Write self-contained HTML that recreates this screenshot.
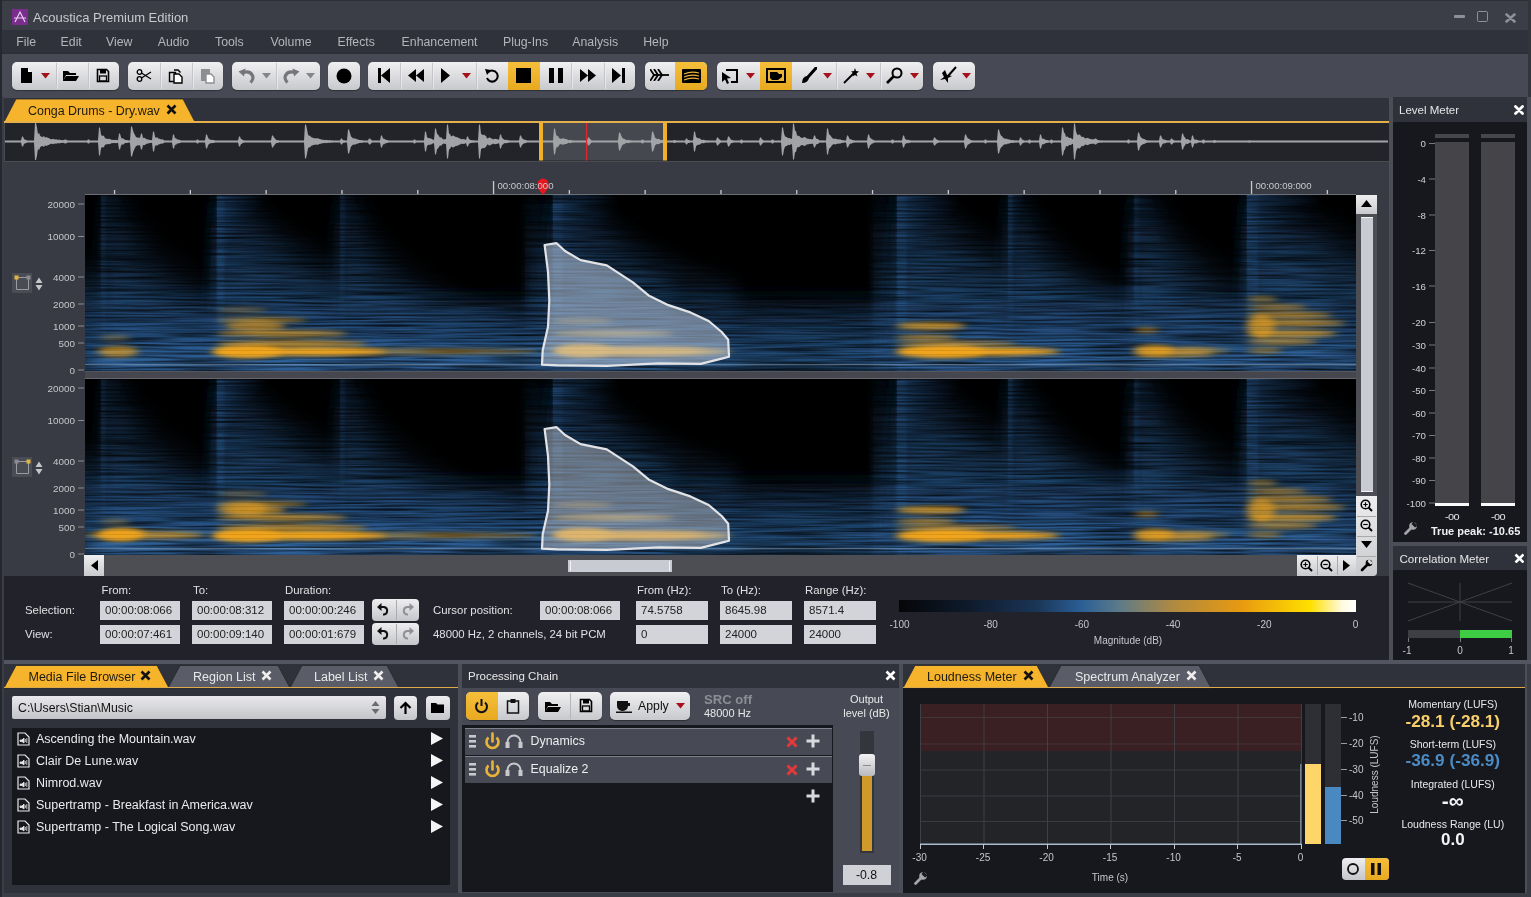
<!DOCTYPE html>
<html><head><meta charset="utf-8"><style>
html,body{margin:0;padding:0;width:1531px;height:897px;overflow:hidden;background:#2a2c33;}
body{position:relative;font-family:"Liberation Sans",sans-serif;}
div{position:absolute;box-sizing:border-box;}
.t{white-space:pre;}
</style></head><body>
<div style="left:0px;top:0px;width:1531px;height:30px;background:#3b3d47;"></div>
<div style="left:0px;top:0px;width:1531px;height:1px;background:#2c2e35;"></div>
<svg style="position:absolute;left:12px;top:9px;" width="16" height="16" viewBox="0 0 16 16"><rect width="16" height="16" fill="#7b2d8e"/><path d="M3 13 L8 3 L13 13 M2 9 H14" stroke="#e6d0ee" stroke-width="1.2" fill="none"/></svg>
<div class="t" style="left:33px;top:8.5px;font-size:13px;line-height:17px;color:#c9cace;">Acoustica Premium Edition</div>
<div style="left:1454px;top:15.2px;width:11px;height:2.6px;background:#8e9099;border-radius:1px;"></div>
<div style="left:1477px;top:11px;width:11px;height:11px;border:1.5px solid #8e9099;border-radius:1.5px;"></div>
<svg style="position:absolute;left:1505px;top:12.5px;" width="11" height="10" viewBox="0 0 11 10"><path d="M1.5 1.5 L9.5 8.5 M9.5 1.5 L1.5 8.5" stroke="#8e9099" stroke-width="2.6" stroke-linecap="round"/></svg>
<div style="left:0px;top:30px;width:1531px;height:24px;background:#30323b;"></div>
<div style="left:0px;top:52px;width:1531px;height:2px;background:#2d2f37;"></div>
<div class="t" style="left:16.2px;top:33.5px;font-size:12.3px;line-height:16px;color:#b4b5ba;">File</div>
<div class="t" style="left:60.6px;top:33.5px;font-size:12.3px;line-height:16px;color:#b4b5ba;">Edit</div>
<div class="t" style="left:106px;top:33.5px;font-size:12.3px;line-height:16px;color:#b4b5ba;">View</div>
<div class="t" style="left:157.7px;top:33.5px;font-size:12.3px;line-height:16px;color:#b4b5ba;">Audio</div>
<div class="t" style="left:215px;top:33.5px;font-size:12.3px;line-height:16px;color:#b4b5ba;">Tools</div>
<div class="t" style="left:270.5px;top:33.5px;font-size:12.3px;line-height:16px;color:#b4b5ba;">Volume</div>
<div class="t" style="left:337.5px;top:33.5px;font-size:12.3px;line-height:16px;color:#b4b5ba;">Effects</div>
<div class="t" style="left:401.6px;top:33.5px;font-size:12.3px;line-height:16px;color:#b4b5ba;">Enhancement</div>
<div class="t" style="left:503px;top:33.5px;font-size:12.3px;line-height:16px;color:#b4b5ba;">Plug-Ins</div>
<div class="t" style="left:572.3px;top:33.5px;font-size:12.3px;line-height:16px;color:#b4b5ba;">Analysis</div>
<div class="t" style="left:643.2px;top:33.5px;font-size:12.3px;line-height:16px;color:#b4b5ba;">Help</div>
<div style="left:0px;top:54px;width:1531px;height:44px;background:#474a54;"></div>
<div style="left:12px;top:62px;width:107px;height:27.5px;background:linear-gradient(#f0f0f2,#c8c9cd);border-radius:5px;box-shadow:0 1px 1px rgba(0,0,0,0.35);"></div>
<div style="left:56px;top:63px;width:1px;height:25.5px;background:#c4c5c9;"></div>
<div style="left:57px;top:63px;width:1px;height:25.5px;background:#f4f4f6;opacity:0.6;"></div>
<div style="left:87.5px;top:63px;width:1px;height:25.5px;background:#c4c5c9;"></div>
<div style="left:88.5px;top:63px;width:1px;height:25.5px;background:#f4f4f6;opacity:0.6;"></div>
<div style="left:128px;top:62px;width:95px;height:27.5px;background:linear-gradient(#f0f0f2,#c8c9cd);border-radius:5px;box-shadow:0 1px 1px rgba(0,0,0,0.35);"></div>
<div style="left:159.5px;top:63px;width:1px;height:25.5px;background:#c4c5c9;"></div>
<div style="left:160.5px;top:63px;width:1px;height:25.5px;background:#f4f4f6;opacity:0.6;"></div>
<div style="left:192px;top:63px;width:1px;height:25.5px;background:#c4c5c9;"></div>
<div style="left:193px;top:63px;width:1px;height:25.5px;background:#f4f4f6;opacity:0.6;"></div>
<div style="left:232px;top:62px;width:87.5px;height:27.5px;background:linear-gradient(#f0f0f2,#c8c9cd);border-radius:5px;box-shadow:0 1px 1px rgba(0,0,0,0.35);"></div>
<div style="left:276px;top:63px;width:1px;height:25.5px;background:#c4c5c9;"></div>
<div style="left:277px;top:63px;width:1px;height:25.5px;background:#f4f4f6;opacity:0.6;"></div>
<div style="left:328px;top:62px;width:31.5px;height:27.5px;background:linear-gradient(#f0f0f2,#c8c9cd);border-radius:5px;box-shadow:0 1px 1px rgba(0,0,0,0.35);"></div>
<div style="left:368.4px;top:62px;width:267.0px;height:27.5px;background:linear-gradient(#f0f0f2,#c8c9cd);border-radius:5px;box-shadow:0 1px 1px rgba(0,0,0,0.35);"></div>
<div style="left:507.7px;top:62px;width:32.30000000000001px;height:27.5px;background:linear-gradient(#f6bf3a,#e8a920);"></div>
<div style="left:400px;top:63px;width:1px;height:25.5px;background:#c4c5c9;"></div>
<div style="left:401px;top:63px;width:1px;height:25.5px;background:#f4f4f6;opacity:0.6;"></div>
<div style="left:431.5px;top:63px;width:1px;height:25.5px;background:#c4c5c9;"></div>
<div style="left:432.5px;top:63px;width:1px;height:25.5px;background:#f4f4f6;opacity:0.6;"></div>
<div style="left:476px;top:63px;width:1px;height:25.5px;background:#c4c5c9;"></div>
<div style="left:477px;top:63px;width:1px;height:25.5px;background:#f4f4f6;opacity:0.6;"></div>
<div style="left:571.4px;top:63px;width:1px;height:25.5px;background:#c4c5c9;"></div>
<div style="left:572.4px;top:63px;width:1px;height:25.5px;background:#f4f4f6;opacity:0.6;"></div>
<div style="left:603.6px;top:63px;width:1px;height:25.5px;background:#c4c5c9;"></div>
<div style="left:604.6px;top:63px;width:1px;height:25.5px;background:#f4f4f6;opacity:0.6;"></div>
<div style="left:644.6px;top:62px;width:62.799999999999955px;height:27.5px;background:linear-gradient(#f0f0f2,#c8c9cd);border-radius:5px;box-shadow:0 1px 1px rgba(0,0,0,0.35);"></div>
<div style="left:675.4px;top:62px;width:32.0px;height:27.5px;background:linear-gradient(#f6bf3a,#e8a920);border-top-right-radius:5px;border-bottom-right-radius:5px;"></div>
<div style="left:716.6px;top:62px;width:206.89999999999998px;height:27.5px;background:linear-gradient(#f0f0f2,#c8c9cd);border-radius:5px;box-shadow:0 1px 1px rgba(0,0,0,0.35);"></div>
<div style="left:760px;top:62px;width:32px;height:27.5px;background:linear-gradient(#f6bf3a,#e8a920);"></div>
<div style="left:835.5px;top:63px;width:1px;height:25.5px;background:#c4c5c9;"></div>
<div style="left:836.5px;top:63px;width:1px;height:25.5px;background:#f4f4f6;opacity:0.6;"></div>
<div style="left:879.6px;top:63px;width:1px;height:25.5px;background:#c4c5c9;"></div>
<div style="left:880.6px;top:63px;width:1px;height:25.5px;background:#f4f4f6;opacity:0.6;"></div>
<div style="left:932.6px;top:62px;width:42.799999999999955px;height:27.5px;background:linear-gradient(#f0f0f2,#c8c9cd);border-radius:5px;box-shadow:0 1px 1px rgba(0,0,0,0.35);"></div>
<svg style="position:absolute;left:20px;top:67px;" width="14" height="17" viewBox="0 0 14 17"><path d="M1 1 H8 L12 5 V16 H1Z" fill="#000"/><path d="M8 1 V5 H12" fill="#fff" stroke="none"/><path d="M8 1 L12 5 H8Z" fill="#fff"/></svg>
<svg style="position:absolute;left:41px;top:73px;" width="9" height="6" viewBox="0 0 9 6"><path d="M0 0 H9 L4.5 5.5Z" fill="#a5121b"/></svg>
<svg style="position:absolute;left:62px;top:69px;" width="18" height="13" viewBox="0 0 18 13"><path d="M1 2 H6 L8 4 H14 V6 H4 L1 12Z M4 7 H17 L14 12 H1Z" fill="#000"/></svg>
<svg style="position:absolute;left:96px;top:68px;" width="14" height="15" viewBox="0 0 14 15"><path d="M1.5 1.5 H10.5 L12.5 3.5 V13.5 H1.5Z" fill="none" stroke="#000" stroke-width="1.6"/><rect x="4" y="1.5" width="6" height="4" fill="#000"/><rect x="3.5" y="8" width="7" height="5" fill="none" stroke="#000" stroke-width="1.3"/></svg>
<svg style="position:absolute;left:136px;top:68px;" width="16" height="15" viewBox="0 0 16 15"><circle cx="3.5" cy="4" r="2.3" fill="none" stroke="#000" stroke-width="1.3"/><circle cx="3.5" cy="11" r="2.3" fill="none" stroke="#000" stroke-width="1.3"/><path d="M5.5 5 L15 11 M5.5 10 L15 4" stroke="#000" stroke-width="1.2"/></svg>
<svg style="position:absolute;left:168px;top:68px;" width="16" height="16" viewBox="0 0 16 16"><path d="M1.5 4.5 H7.5 V13.5 H1.5Z M6 2 H10 L12.5 4.5" fill="none" stroke="#000" stroke-width="1.4"/><path d="M6 6 H11 L14 9 V15 H6Z" fill="#fff" stroke="#000" stroke-width="1.4"/></svg>
<svg style="position:absolute;left:200px;top:68px;" width="16" height="16" viewBox="0 0 16 16"><path d="M1 1 H10 V13 H1Z" fill="#8d8e92"/><path d="M6 6 H11 L14 9 V15 H6Z" fill="#fff" stroke="#8d8e92" stroke-width="1.4"/></svg>
<svg style="position:absolute;left:238px;top:68px;" width="18" height="16" viewBox="0 0 18 16"><path d="M5 4.5 Q12 2.5 14.5 7.5 Q16 11 12.5 14.5" fill="none" stroke="#75767b" stroke-width="3.2"/><path d="M0.5 3.5 L7.5 0.5 L6 8.5Z" fill="#75767b"/></svg>
<svg style="position:absolute;left:262px;top:73px;" width="9" height="6" viewBox="0 0 9 6"><path d="M0 0 H9 L4.5 5.5Z" fill="#85868b"/></svg>
<svg style="position:absolute;left:282px;top:68px;" width="18" height="16" viewBox="0 0 18 16"><path d="M13 4.5 Q6 2.5 3.5 7.5 Q2 11 5.5 14.5" fill="none" stroke="#75767b" stroke-width="3.2"/><path d="M17.5 3.5 L10.5 0.5 L12 8.5Z" fill="#75767b"/></svg>
<svg style="position:absolute;left:306px;top:73px;" width="9" height="6" viewBox="0 0 9 6"><path d="M0 0 H9 L4.5 5.5Z" fill="#85868b"/></svg>
<svg style="position:absolute;left:336px;top:68px;" width="16" height="16" viewBox="0 0 16 16"><circle cx="8" cy="8" r="7.5" fill="#000"/></svg>
<svg style="position:absolute;left:377px;top:68px;" width="14" height="15" viewBox="0 0 14 15"><rect x="1" y="0" width="3" height="15"/><path d="M13 0 V15 L4 7.5Z"/></svg>
<svg style="position:absolute;left:408px;top:69px;" width="16" height="13" viewBox="0 0 16 13"><path d="M8 0 V13 L0 6.5Z M16 0 V13 L8 6.5Z"/></svg>
<svg style="position:absolute;left:441px;top:68px;" width="9" height="15" viewBox="0 0 9 15"><path d="M0 0 V15 L9 7.5Z"/></svg>
<svg style="position:absolute;left:462px;top:73px;" width="9" height="6" viewBox="0 0 9 6"><path d="M0 0 H9 L4.5 5.5Z" fill="#a5121b"/></svg>
<svg style="position:absolute;left:484px;top:68px;" width="15" height="15" viewBox="0 0 15 15"><path d="M4.5 4 A5.5 5.5 0 1 1 3 10" fill="none" stroke="#000" stroke-width="2"/><path d="M1 1 L7 2 L3 7Z"/></svg>
<svg style="position:absolute;left:516px;top:68px;" width="15" height="15" viewBox="0 0 15 15"><rect width="15" height="15"/></svg>
<svg style="position:absolute;left:549px;top:68px;" width="14" height="15" viewBox="0 0 14 15"><rect x="0" width="5" height="15"/><rect x="9" width="5" height="15"/></svg>
<svg style="position:absolute;left:580px;top:69px;" width="16" height="13" viewBox="0 0 16 13"><path d="M0 0 V13 L8 6.5Z M8 0 V13 L16 6.5Z"/></svg>
<svg style="position:absolute;left:612px;top:68px;" width="14" height="15" viewBox="0 0 14 15"><path d="M0 0 V15 L9 7.5Z"/><rect x="10" width="3" height="15"/></svg>
<svg style="position:absolute;left:650px;top:69px;" width="19" height="12" viewBox="0 0 19 12"><path d="M0 0 L4 6 L0 12 M4 0 L8 6 L4 12 M8 0 L12 6 L8 12" fill="none" stroke="#000" stroke-width="1.8"/><path d="M4 6 H19" stroke="#000" stroke-width="1.8"/></svg>
<svg style="position:absolute;left:682px;top:69px;" width="19" height="14" viewBox="0 0 19 14"><rect width="19" height="14" rx="1" fill="#000"/><path d="M2 5 Q9 2 17 4 M2 8 Q9 5 17 7 M2 11 Q9 8 17 10" stroke="#e9b23a" stroke-width="1.2" fill="none"/></svg>
<svg style="position:absolute;left:722px;top:68px;" width="17" height="16" viewBox="0 0 17 16"><path d="M4 2 H15 V14 H9" fill="none" stroke="#000" stroke-width="2"/><path d="M0 4 L9 10 L5 10.5 L7 15 L5 16 L3 11.5 L0 14Z"/></svg>
<svg style="position:absolute;left:746px;top:73px;" width="9" height="6" viewBox="0 0 9 6"><path d="M0 0 H9 L4.5 5.5Z" fill="#a5121b"/></svg>
<svg style="position:absolute;left:766px;top:68px;" width="20" height="15" viewBox="0 0 20 15"><rect width="20" height="15" fill="#000"/><rect x="2" y="2" width="16" height="11" fill="#e9b23a"/><path d="M4 4 H11 L13 6 H16 V9 L12 12 H6 L4 10Z" fill="#000"/></svg>
<svg style="position:absolute;left:801px;top:67px;" width="16" height="17" viewBox="0 0 16 17"><path d="M15 1 L7 10" stroke="#000" stroke-width="3" stroke-linecap="round"/><path d="M6 9 Q1 10 1 16 Q7 16 8 11Z"/></svg>
<svg style="position:absolute;left:823px;top:73px;" width="9" height="6" viewBox="0 0 9 6"><path d="M0 0 H9 L4.5 5.5Z" fill="#a5121b"/></svg>
<svg style="position:absolute;left:843px;top:67px;" width="17" height="17" viewBox="0 0 17 17"><path d="M1 16 L11 6" stroke="#000" stroke-width="1.8"/><path d="M12 1 L13 4 L16 4.5 L13.5 6.5 L14.5 9.5 L12 8 L9.5 9.5 L10.5 6.5 L8 4.5 L11 4Z"/></svg>
<svg style="position:absolute;left:866px;top:73px;" width="9" height="6" viewBox="0 0 9 6"><path d="M0 0 H9 L4.5 5.5Z" fill="#a5121b"/></svg>
<svg style="position:absolute;left:886px;top:67px;" width="17" height="17" viewBox="0 0 17 17"><circle cx="11" cy="6" r="4.5" fill="none" stroke="#000" stroke-width="2"/><path d="M8 9 L1 16" stroke="#000" stroke-width="2.6"/></svg>
<svg style="position:absolute;left:910px;top:73px;" width="9" height="6" viewBox="0 0 9 6"><path d="M0 0 H9 L4.5 5.5Z" fill="#a5121b"/></svg>
<svg style="position:absolute;left:939px;top:66px;" width="18" height="18" viewBox="0 0 18 18"><path d="M17 1 L9 10" stroke="#000" stroke-width="2"/><path d="M3 7 L5 11 L1 14 L6 13 L9 17 L9 12 L13 10 L8 9 L6 4Z"/></svg>
<svg style="position:absolute;left:962px;top:73px;" width="9" height="6" viewBox="0 0 9 6"><path d="M0 0 H9 L4.5 5.5Z" fill="#a5121b"/></svg>
<div style="left:0px;top:98px;width:1389px;height:25px;background:#30323b;"></div>
<svg style="position:absolute;left:4px;top:98px;" width="192" height="25" viewBox="0 0 192 25"><path d="M0 24 L12 1 H179 L191 24Z" fill="#f5b42b" stroke="#2a2b30" stroke-width="0.8"/></svg>
<div class="t" style="left:28px;top:102.5px;font-size:12.45px;line-height:16px;color:#1d1a12;">Conga Drums - Dry.wav</div>
<svg style="position:absolute;left:166px;top:104px;" width="11" height="11" viewBox="0 0 11 11"><path d="M1.5 1.5 L9.5 9.5 M9.5 1.5 L1.5 9.5" stroke="#111" stroke-width="2.6"/></svg>
<div style="left:4px;top:121px;width:1385px;height:1.6px;background:#e3b04c;"></div>
<div style="left:0px;top:0px;width:1px;height:897px;background:#262830;"></div>
<div style="left:1528px;top:0px;width:3px;height:897px;background:#33353d;"></div>
<div style="left:1px;top:97px;width:3px;height:800px;background:#3a3c45;"></div>
<div style="left:4px;top:123px;width:1385px;height:39px;background:#23242a;border-left:1px solid #484a52;border-bottom:1.5px solid #4a4c54;"></div>
<svg style="position:absolute;left:0px;top:0px;" width="1389" height="162" viewBox="0 0 1389 162"><rect x="543" y="123" width="120" height="37.5" fill="#46484f"/><rect x="5" y="141.0" width="1383" height="1" fill="#5f6065"/><polygon points="5,140.5 6,140.5 7,140.5 8,140.5 9,140.5 10,140.5 11,140.5 12,140.5 13,140.5 14,140.5 15,140.5 16,140.5 17,140.5 18,140.5 19,140.5 20,140.5 21,140.5 22,136.5 23,136.5 24,139.0 25,139.8 26,139.8 27,140.5 28,140.5 29,140.5 30,140.5 31,140.5 32,140.5 33,140.5 34,140.5 35,123.0 36,123.0 37,127.5 38,134.5 39,132.4 40,135.4 41,136.4 42,136.9 43,136.8 44,135.9 45,137.7 46,137.1 47,137.3 48,138.1 49,138.0 50,139.0 51,139.2 52,139.2 53,138.7 54,139.2 55,139.5 56,139.3 57,139.6 58,139.9 59,139.6 60,139.8 61,140.2 62,140.1 63,140.2 64,140.1 65,139.5 66,139.5 67,140.3 68,140.5 69,140.5 70,140.5 71,140.5 72,140.5 73,140.5 74,140.5 75,140.5 76,140.5 77,140.5 78,140.5 79,140.5 80,140.5 81,140.5 82,140.5 83,140.5 84,140.5 85,140.5 86,140.5 87,140.5 88,139.5 89,139.5 90,140.5 91,140.5 92,140.5 93,140.5 94,140.5 95,140.5 96,140.5 97,140.5 98,140.5 99,127.5 100,127.5 101,134.6 102,136.0 103,135.5 104,136.1 105,138.3 106,138.5 107,138.7 108,139.0 109,138.8 110,138.9 111,139.5 112,140.0 113,139.7 114,139.9 115,139.9 116,139.7 117,140.0 118,140.3 119,133.5 120,133.5 121,137.2 122,138.8 123,138.2 124,139.1 125,139.9 126,140.0 127,140.1 128,140.3 129,140.5 130,140.3 131,126.5 132,126.5 133,130.5 134,133.2 135,135.1 136,137.0 137,137.3 138,138.1 139,137.3 140,138.0 141,133.5 142,133.5 143,137.9 144,137.7 145,138.1 146,138.9 147,139.3 148,139.5 149,139.7 150,140.0 151,140.1 152,140.3 153,131.5 154,131.5 155,136.8 156,138.1 157,137.0 158,138.2 159,138.8 160,138.7 161,139.5 162,139.3 163,139.6 164,140.3 165,140.4 166,140.5 167,140.5 168,140.5 169,140.5 170,140.5 171,140.5 172,140.5 173,134.5 174,134.5 175,138.5 176,138.1 177,139.5 178,139.6 179,139.7 180,140.1 181,140.4 182,140.5 183,140.5 184,140.5 185,140.5 186,140.5 187,140.5 188,140.5 189,140.5 190,140.5 191,140.5 192,140.5 193,140.5 194,140.5 195,140.5 196,140.5 197,139.5 198,139.5 199,140.5 200,140.5 201,140.5 202,140.5 203,140.5 204,140.5 205,140.5 206,134.5 207,134.5 208,137.6 209,139.1 210,139.4 211,140.0 212,139.7 213,139.9 214,140.1 215,140.5 216,140.5 217,140.5 218,140.5 219,140.5 220,140.5 221,140.5 222,140.5 223,140.5 224,140.5 225,140.5 226,140.5 227,140.5 228,140.5 229,140.5 230,140.5 231,140.5 232,140.5 233,140.5 234,140.5 235,140.5 236,140.5 237,140.5 238,140.5 239,136.5 240,136.5 241,139.0 242,139.2 243,140.3 244,140.2 245,140.5 246,140.5 247,140.5 248,140.5 249,140.5 250,140.5 251,140.5 252,140.5 253,140.5 254,140.5 255,140.5 256,140.5 257,140.5 258,140.5 259,140.5 260,140.5 261,140.5 262,140.5 263,140.5 264,140.5 265,140.5 266,140.5 267,140.5 268,140.5 269,140.5 270,140.5 271,140.5 272,135.5 273,135.5 274,137.4 275,138.6 276,139.8 277,140.2 278,139.9 279,140.4 280,140.5 281,140.5 282,140.5 283,140.5 284,140.5 285,140.5 286,140.5 287,140.5 288,140.5 289,140.5 290,140.5 291,140.5 292,140.5 293,140.5 294,140.5 295,140.5 296,140.5 297,140.5 298,140.5 299,140.5 300,140.5 301,140.5 302,140.5 303,140.5 304,140.5 305,124.5 306,124.5 307,129.3 308,134.4 309,136.0 310,135.5 311,136.9 312,137.6 313,137.8 314,138.3 315,138.3 316,138.3 317,138.6 318,138.1 319,139.0 320,138.9 321,139.5 322,139.4 323,139.9 324,139.8 325,140.2 326,139.7 327,139.9 328,140.3 329,140.2 330,140.0 331,140.5 332,140.3 333,140.5 334,140.5 335,140.5 336,140.5 337,140.5 338,140.5 339,140.5 340,140.5 341,138.5 342,138.5 343,140.2 344,140.1 345,140.5 346,140.5 347,140.5 348,129.5 349,129.5 350,132.9 351,136.5 352,137.3 353,138.6 354,138.3 355,138.5 356,138.8 357,139.4 358,139.3 359,140.0 360,139.9 361,140.2 362,140.1 363,140.5 364,140.5 365,140.5 366,140.5 367,140.5 368,140.5 369,138.5 370,138.5 371,139.6 372,140.5 373,140.5 374,140.5 375,140.5 376,140.5 377,140.5 378,140.5 379,140.5 380,140.5 381,135.5 382,135.5 383,138.8 384,138.6 385,139.5 386,139.8 387,140.1 388,140.3 389,140.5 390,140.5 391,140.5 392,140.5 393,140.5 394,140.5 395,140.5 396,140.5 397,140.5 398,140.5 399,140.5 400,140.5 401,140.5 402,140.5 403,140.5 404,140.5 405,140.5 406,140.5 407,140.5 408,140.5 409,140.5 410,140.5 411,140.5 412,140.5 413,140.5 414,139.5 415,139.5 416,140.4 417,140.5 418,140.5 419,140.5 420,140.5 421,140.5 422,140.5 423,140.5 424,140.5 425,131.5 426,131.5 427,137.1 428,138.0 429,138.3 430,138.2 431,138.6 432,139.0 433,139.7 434,139.7 435,128.5 436,128.5 437,133.8 438,134.4 439,136.0 440,137.8 441,137.0 442,138.2 443,139.2 444,139.4 445,139.0 446,139.3 447,124.5 448,124.5 449,133.6 450,134.1 451,136.2 452,136.2 453,135.3 454,136.0 455,136.6 456,137.3 457,137.1 458,137.4 459,138.3 460,138.3 461,139.4 462,138.7 463,139.2 464,139.1 465,139.4 466,139.9 467,136.5 468,136.5 469,139.3 470,139.7 471,140.1 472,140.2 473,140.3 474,140.3 475,140.5 476,140.5 477,140.5 478,140.5 479,124.5 480,124.5 481,133.7 482,134.5 483,135.3 484,134.6 485,135.5 486,136.0 487,138.2 488,138.5 489,137.5 490,137.4 491,138.4 492,138.5 493,139.5 494,139.1 495,138.7 496,139.0 497,139.2 498,139.2 499,140.0 500,134.5 501,134.5 502,138.1 503,138.4 504,139.7 505,139.8 506,139.9 507,139.8 508,140.2 509,140.3 510,140.5 511,140.5 512,140.5 513,140.5 514,140.5 515,140.5 516,140.5 517,140.5 518,140.5 519,140.5 520,135.5 521,135.5 522,138.3 523,138.8 524,139.8 525,139.7 526,140.0 527,140.4 528,140.5 529,140.5 530,140.5 531,140.5 532,140.5 533,140.5 534,140.5 535,140.5 536,140.5 537,140.5 538,140.5 539,140.5 540,140.5 541,140.5 542,140.5 543,140.5 544,140.5 545,140.5 546,140.5 547,140.5 548,140.5 549,140.5 550,140.5 551,140.5 552,140.5 553,140.5 554,128.5 555,128.5 556,134.3 557,136.4 558,135.4 559,138.0 560,138.6 561,138.9 562,138.6 563,138.2 564,138.5 565,139.0 566,138.9 567,139.2 568,139.9 569,140.2 570,139.8 571,140.0 572,140.5 573,140.3 574,140.5 575,140.5 576,140.5 577,140.5 578,140.5 579,140.5 580,140.5 581,140.5 582,140.5 583,140.5 584,140.5 585,140.5 586,140.5 587,140.5 588,137.5 589,137.5 590,138.8 591,140.1 592,140.4 593,140.4 594,140.5 595,140.5 596,140.5 597,140.5 598,140.5 599,140.5 600,140.5 601,140.5 602,140.5 603,140.5 604,140.5 605,140.5 606,140.5 607,140.5 608,140.5 609,140.5 610,140.5 611,140.5 612,140.5 613,140.5 614,140.5 615,140.5 616,140.5 617,140.5 618,140.5 619,132.5 620,132.5 621,135.1 622,137.3 623,138.7 624,138.5 625,139.4 626,139.7 627,140.2 628,139.8 629,139.9 630,140.2 631,140.2 632,140.5 633,140.5 634,140.5 635,140.5 636,140.5 637,140.5 638,140.5 639,140.5 640,140.5 641,140.5 642,139.5 643,139.5 644,140.5 645,140.5 646,140.5 647,140.5 648,140.5 649,140.5 650,140.5 651,140.5 652,131.5 653,131.5 654,134.3 655,137.6 656,138.6 657,139.0 658,138.8 659,138.9 660,139.5 661,139.9 662,139.9 663,140.0 664,140.1 665,140.2 666,140.3 667,140.5 668,140.5 669,140.5 670,140.5 671,140.5 672,140.5 673,140.5 674,140.0 675,140.0 676,140.5 677,140.5 678,140.5 679,140.5 680,140.5 681,140.5 682,140.5 683,140.5 684,140.5 685,140.5 686,138.5 687,138.5 688,140.1 689,140.1 690,140.5 691,140.5 692,140.5 693,140.5 694,131.5 695,131.5 696,136.8 697,137.7 698,138.3 699,138.3 700,138.6 701,139.5 702,139.9 703,139.8 704,139.7 705,140.3 706,140.3 707,140.5 708,140.3 709,140.5 710,140.5 711,140.5 712,140.5 713,140.5 714,140.5 715,140.5 716,140.5 717,137.5 718,137.5 719,139.1 720,139.7 721,140.5 722,140.5 723,140.5 724,140.5 725,140.5 726,140.5 727,140.5 728,136.5 729,136.5 730,138.1 731,139.9 732,139.8 733,140.3 734,140.5 735,140.5 736,140.5 737,140.5 738,140.5 739,140.5 740,140.5 741,139.5 742,139.5 743,140.5 744,140.5 745,140.5 746,140.5 747,140.5 748,140.5 749,140.5 750,140.5 751,140.5 752,140.5 753,140.5 754,140.5 755,140.5 756,140.5 757,140.5 758,140.5 759,140.5 760,137.5 761,137.5 762,139.3 763,140.0 764,140.5 765,140.5 766,140.5 767,140.5 768,140.5 769,140.5 770,140.5 771,140.5 772,139.5 773,139.5 774,140.5 775,140.5 776,140.5 777,140.5 778,140.5 779,140.5 780,140.5 781,140.5 782,127.5 783,127.5 784,133.4 785,136.3 786,137.1 787,137.0 788,138.2 789,137.9 790,138.1 791,139.1 792,138.5 793,123.5 794,123.5 795,130.8 796,131.1 797,135.3 798,135.9 799,135.7 800,136.7 801,137.8 802,137.7 803,138.1 804,136.8 805,137.6 806,137.5 807,138.9 808,138.2 809,139.3 810,139.0 811,139.0 812,139.5 813,139.1 814,135.5 815,135.5 816,138.2 817,139.0 818,139.1 819,140.1 820,140.4 821,140.2 822,140.5 823,140.3 824,140.5 825,140.5 826,140.5 827,128.5 828,128.5 829,134.3 830,135.1 831,136.3 832,137.7 833,138.4 834,139.1 835,138.4 836,138.8 837,139.3 838,139.2 839,139.6 840,139.3 841,139.7 842,140.2 843,139.9 844,140.5 845,140.4 846,140.5 847,135.5 848,135.5 849,137.8 850,139.6 851,139.2 852,139.7 853,140.2 854,140.3 855,140.5 856,140.5 857,140.5 858,140.5 859,140.5 860,140.5 861,140.5 862,140.5 863,140.5 864,140.5 865,140.5 866,140.5 867,140.5 868,134.5 869,134.5 870,137.7 871,138.2 872,139.6 873,139.4 874,140.3 875,140.4 876,140.5 877,140.4 878,140.5 879,140.5 880,140.5 881,140.5 882,140.5 883,140.5 884,140.5 885,140.5 886,140.5 887,140.5 888,140.5 889,140.5 890,140.5 891,140.5 892,139.5 893,139.5 894,140.5 895,140.5 896,140.5 897,140.5 898,140.5 899,140.5 900,140.5 901,140.5 902,140.5 903,135.5 904,135.5 905,138.7 906,139.6 907,140.0 908,139.8 909,140.1 910,140.3 911,140.5 912,140.5 913,140.5 914,140.5 915,140.5 916,140.5 917,140.5 918,140.5 919,140.5 920,140.5 921,140.5 922,140.5 923,140.5 924,140.5 925,140.5 926,140.5 927,140.5 928,140.5 929,140.5 930,140.5 931,140.5 932,140.5 933,140.5 934,137.5 935,137.5 936,139.0 937,139.8 938,140.1 939,140.5 940,140.5 941,140.5 942,140.5 943,140.5 944,140.5 945,140.5 946,140.5 947,140.5 948,140.5 949,140.5 950,140.5 951,140.5 952,140.5 953,140.5 954,140.5 955,140.5 956,140.5 957,140.5 958,140.5 959,140.5 960,140.5 961,140.5 962,140.5 963,140.5 964,140.5 965,134.5 966,134.5 967,136.9 968,138.6 969,138.8 970,139.5 971,140.3 972,140.2 973,140.4 974,140.4 975,140.5 976,140.5 977,140.5 978,140.5 979,140.5 980,140.5 981,140.5 982,140.5 983,140.5 984,140.5 985,139.5 986,139.5 987,140.5 988,140.5 989,140.5 990,140.5 991,140.5 992,140.5 993,140.5 994,140.5 995,140.5 996,140.5 997,140.5 998,129.5 999,129.5 1000,133.5 1001,135.5 1002,136.3 1003,137.4 1004,138.4 1005,138.6 1006,138.9 1007,138.6 1008,139.8 1009,139.1 1010,140.1 1011,140.1 1012,140.2 1013,139.9 1014,140.3 1015,140.5 1016,140.3 1017,140.5 1018,140.5 1019,140.5 1020,137.5 1021,137.5 1022,139.6 1023,139.8 1024,140.5 1025,140.5 1026,140.5 1027,140.5 1028,140.5 1029,139.5 1030,139.5 1031,140.5 1032,140.5 1033,140.5 1034,140.5 1035,140.5 1036,140.5 1037,140.5 1038,140.5 1039,140.5 1040,134.5 1041,134.5 1042,138.5 1043,138.7 1044,138.8 1045,139.4 1046,139.9 1047,140.0 1048,140.3 1049,140.5 1050,140.5 1051,139.5 1052,139.5 1053,140.5 1054,140.5 1055,140.5 1056,140.5 1057,140.5 1058,140.5 1059,140.5 1060,140.5 1061,140.5 1062,127.5 1063,127.5 1064,132.5 1065,133.6 1066,136.9 1067,136.5 1068,136.8 1069,138.0 1070,138.1 1071,137.7 1072,139.3 1073,138.9 1074,123.5 1075,123.5 1076,131.6 1077,133.9 1078,135.2 1079,134.4 1080,134.5 1081,136.2 1082,137.3 1083,136.4 1084,137.6 1085,138.2 1086,138.6 1087,137.7 1088,137.9 1089,138.4 1090,138.9 1091,138.9 1092,139.5 1093,138.9 1094,139.6 1095,138.5 1096,138.5 1097,139.6 1098,140.0 1099,140.3 1100,140.2 1101,140.5 1102,140.2 1103,140.5 1104,140.4 1105,140.5 1106,140.5 1107,140.5 1108,140.5 1109,140.5 1110,140.5 1111,140.5 1112,140.5 1113,140.5 1114,140.5 1115,140.5 1116,140.5 1117,140.5 1118,140.5 1119,140.5 1120,140.5 1121,140.5 1122,140.5 1123,140.5 1124,140.5 1125,140.5 1126,140.5 1127,140.5 1128,139.5 1129,139.5 1130,140.5 1131,140.5 1132,140.5 1133,140.5 1134,140.5 1135,140.5 1136,140.5 1137,140.5 1138,132.5 1139,132.5 1140,135.8 1141,137.5 1142,137.9 1143,138.9 1144,138.8 1145,139.4 1146,140.0 1147,140.2 1148,140.4 1149,140.3 1150,140.5 1151,140.5 1152,140.5 1153,140.5 1154,140.5 1155,140.5 1156,140.5 1157,140.5 1158,140.5 1159,140.5 1160,135.5 1161,135.5 1162,137.9 1163,139.6 1164,139.4 1165,139.8 1166,139.9 1167,140.5 1168,140.3 1169,140.5 1170,140.5 1171,138.5 1172,138.5 1173,139.8 1174,140.2 1175,140.5 1176,140.5 1177,140.5 1178,140.5 1179,140.5 1180,140.5 1181,140.5 1182,133.5 1183,133.5 1184,136.6 1185,137.5 1186,139.4 1187,138.9 1188,139.2 1189,139.8 1190,140.4 1191,140.4 1192,135.5 1193,135.5 1194,138.9 1195,139.7 1196,139.4 1197,139.7 1198,140.2 1199,140.5 1200,140.5 1201,140.5 1202,140.5 1203,139.5 1204,139.5 1205,140.5 1206,140.5 1207,140.5 1208,140.5 1209,140.5 1210,140.5 1211,140.5 1212,140.5 1213,140.5 1214,140.0 1215,140.0 1216,140.5 1217,140.5 1218,140.5 1219,140.5 1220,140.5 1221,140.5 1222,140.5 1223,140.5 1224,140.5 1225,140.5 1226,140.5 1227,140.5 1228,140.5 1229,140.5 1230,140.5 1231,140.5 1232,140.5 1233,140.5 1234,140.5 1235,140.5 1236,140.5 1237,140.5 1238,140.5 1239,140.5 1240,140.5 1241,140.5 1242,140.5 1243,140.5 1244,140.5 1245,140.5 1246,140.5 1247,140.5 1248,140.5 1249,140.3 1250,140.3 1251,140.5 1252,140.5 1253,140.5 1254,140.5 1255,140.5 1256,140.5 1257,140.5 1258,140.5 1259,140.5 1260,140.5 1261,140.5 1262,140.5 1263,140.5 1264,140.5 1265,140.5 1266,140.5 1267,140.5 1268,140.5 1269,140.5 1270,140.5 1271,140.5 1272,140.5 1273,140.5 1274,140.5 1275,140.5 1276,140.5 1277,140.5 1278,140.5 1279,140.5 1280,140.5 1281,140.5 1282,140.5 1283,140.5 1284,140.5 1285,140.5 1286,140.5 1287,140.5 1288,140.5 1289,140.5 1290,140.5 1291,140.5 1292,140.5 1293,140.5 1294,140.5 1295,140.5 1296,140.5 1297,140.5 1298,140.5 1299,140.5 1300,140.5 1301,140.5 1302,140.5 1303,140.5 1304,140.5 1305,140.5 1306,140.5 1307,140.5 1308,140.5 1309,140.5 1310,140.5 1311,140.5 1312,140.5 1313,140.5 1314,140.5 1315,140.5 1316,140.5 1317,140.5 1318,140.5 1319,140.5 1320,140.5 1321,140.5 1322,140.5 1323,140.5 1324,140.5 1325,140.5 1326,140.5 1327,140.5 1328,140.5 1329,140.5 1330,140.5 1331,140.5 1332,140.5 1333,140.5 1334,140.5 1335,140.5 1336,140.5 1337,140.5 1338,140.5 1339,140.5 1340,140.5 1341,140.5 1342,140.5 1343,140.5 1344,140.5 1345,140.5 1346,140.5 1347,140.5 1348,140.5 1349,140.5 1350,140.5 1351,140.5 1352,140.5 1353,140.5 1354,140.5 1355,140.5 1356,140.5 1357,140.5 1358,140.5 1359,140.5 1360,140.5 1361,140.5 1362,140.5 1363,140.5 1364,140.5 1365,140.5 1366,140.5 1367,140.5 1368,140.5 1369,140.5 1370,140.5 1371,140.5 1372,140.5 1373,140.5 1374,140.5 1375,140.5 1376,140.5 1377,140.5 1378,140.5 1379,140.5 1380,140.5 1381,140.5 1382,140.5 1383,140.5 1384,140.5 1385,140.5 1386,140.5 1387,140.5 1388,140.5 1388,142.5 1387,142.5 1386,142.5 1385,142.5 1384,142.5 1383,142.5 1382,142.5 1381,142.5 1380,142.5 1379,142.5 1378,142.5 1377,142.5 1376,142.5 1375,142.5 1374,142.5 1373,142.5 1372,142.5 1371,142.5 1370,142.5 1369,142.5 1368,142.5 1367,142.5 1366,142.5 1365,142.5 1364,142.5 1363,142.5 1362,142.5 1361,142.5 1360,142.5 1359,142.5 1358,142.5 1357,142.5 1356,142.5 1355,142.5 1354,142.5 1353,142.5 1352,142.5 1351,142.5 1350,142.5 1349,142.5 1348,142.5 1347,142.5 1346,142.5 1345,142.5 1344,142.5 1343,142.5 1342,142.5 1341,142.5 1340,142.5 1339,142.5 1338,142.5 1337,142.5 1336,142.5 1335,142.5 1334,142.5 1333,142.5 1332,142.5 1331,142.5 1330,142.5 1329,142.5 1328,142.5 1327,142.5 1326,142.5 1325,142.5 1324,142.5 1323,142.5 1322,142.5 1321,142.5 1320,142.5 1319,142.5 1318,142.5 1317,142.5 1316,142.5 1315,142.5 1314,142.5 1313,142.5 1312,142.5 1311,142.5 1310,142.5 1309,142.5 1308,142.5 1307,142.5 1306,142.5 1305,142.5 1304,142.5 1303,142.5 1302,142.5 1301,142.5 1300,142.5 1299,142.5 1298,142.5 1297,142.5 1296,142.5 1295,142.5 1294,142.5 1293,142.5 1292,142.5 1291,142.5 1290,142.5 1289,142.5 1288,142.5 1287,142.5 1286,142.5 1285,142.5 1284,142.5 1283,142.5 1282,142.5 1281,142.5 1280,142.5 1279,142.5 1278,142.5 1277,142.5 1276,142.5 1275,142.5 1274,142.5 1273,142.5 1272,142.5 1271,142.5 1270,142.5 1269,142.5 1268,142.5 1267,142.5 1266,142.5 1265,142.5 1264,142.5 1263,142.5 1262,142.5 1261,142.5 1260,142.5 1259,142.5 1258,142.5 1257,142.5 1256,142.5 1255,142.5 1254,142.5 1253,142.5 1252,142.5 1251,142.5 1250,142.7 1249,142.7 1248,142.5 1247,142.5 1246,142.5 1245,142.5 1244,142.5 1243,142.5 1242,142.5 1241,142.5 1240,142.5 1239,142.5 1238,142.5 1237,142.5 1236,142.5 1235,142.5 1234,142.5 1233,142.5 1232,142.5 1231,142.5 1230,142.5 1229,142.5 1228,142.5 1227,142.5 1226,142.5 1225,142.5 1224,142.5 1223,142.5 1222,142.5 1221,142.5 1220,142.5 1219,142.5 1218,142.5 1217,142.5 1216,142.5 1215,143.0 1214,143.0 1213,142.5 1212,142.5 1211,142.5 1210,142.5 1209,142.5 1208,142.5 1207,142.5 1206,142.5 1205,142.5 1204,143.5 1203,143.5 1202,142.5 1201,142.5 1200,142.5 1199,142.5 1198,142.8 1197,143.3 1196,143.6 1195,143.3 1194,144.1 1193,147.5 1192,147.5 1191,142.6 1190,142.6 1189,143.2 1188,143.8 1187,144.1 1186,143.6 1185,145.5 1184,146.4 1183,149.5 1182,149.5 1181,142.5 1180,142.5 1179,142.5 1178,142.5 1177,142.5 1176,142.5 1175,142.5 1174,142.8 1173,143.2 1172,144.5 1171,144.5 1170,142.5 1169,142.5 1168,142.7 1167,142.5 1166,143.1 1165,143.2 1164,143.6 1163,143.4 1162,145.1 1161,147.5 1160,147.5 1159,142.5 1158,142.5 1157,142.5 1156,142.5 1155,142.5 1154,142.5 1153,142.5 1152,142.5 1151,142.5 1150,142.5 1149,142.7 1148,142.6 1147,142.8 1146,143.0 1145,143.6 1144,144.2 1143,144.1 1142,145.1 1141,145.5 1140,147.2 1139,150.5 1138,150.5 1137,142.5 1136,142.5 1135,142.5 1134,142.5 1133,142.5 1132,142.5 1131,142.5 1130,142.5 1129,143.5 1128,143.5 1127,142.5 1126,142.5 1125,142.5 1124,142.5 1123,142.5 1122,142.5 1121,142.5 1120,142.5 1119,142.5 1118,142.5 1117,142.5 1116,142.5 1115,142.5 1114,142.5 1113,142.5 1112,142.5 1111,142.5 1110,142.5 1109,142.5 1108,142.5 1107,142.5 1106,142.5 1105,142.5 1104,142.6 1103,142.5 1102,142.8 1101,142.5 1100,142.8 1099,142.7 1098,143.0 1097,143.4 1096,144.5 1095,144.5 1094,143.4 1093,144.1 1092,143.5 1091,144.1 1090,144.1 1089,144.6 1088,145.1 1087,145.3 1086,144.4 1085,144.8 1084,145.4 1083,146.6 1082,145.7 1081,146.8 1080,148.5 1079,148.6 1078,147.8 1077,149.1 1076,151.4 1075,159.5 1074,159.5 1073,144.1 1072,143.7 1071,145.3 1070,144.9 1069,145.0 1068,146.2 1067,146.5 1066,146.1 1065,149.4 1064,150.5 1063,155.5 1062,155.5 1061,142.5 1060,142.5 1059,142.5 1058,142.5 1057,142.5 1056,142.5 1055,142.5 1054,142.5 1053,142.5 1052,143.5 1051,143.5 1050,142.5 1049,142.5 1048,142.7 1047,143.0 1046,143.1 1045,143.6 1044,144.2 1043,144.3 1042,144.5 1041,148.5 1040,148.5 1039,142.5 1038,142.5 1037,142.5 1036,142.5 1035,142.5 1034,142.5 1033,142.5 1032,142.5 1031,142.5 1030,143.5 1029,143.5 1028,142.5 1027,142.5 1026,142.5 1025,142.5 1024,142.5 1023,143.2 1022,143.4 1021,145.5 1020,145.5 1019,142.5 1018,142.5 1017,142.5 1016,142.7 1015,142.5 1014,142.7 1013,143.1 1012,142.8 1011,142.9 1010,142.9 1009,143.9 1008,143.2 1007,144.4 1006,144.1 1005,144.4 1004,144.6 1003,145.6 1002,146.7 1001,147.5 1000,149.5 999,153.5 998,153.5 997,142.5 996,142.5 995,142.5 994,142.5 993,142.5 992,142.5 991,142.5 990,142.5 989,142.5 988,142.5 987,142.5 986,143.5 985,143.5 984,142.5 983,142.5 982,142.5 981,142.5 980,142.5 979,142.5 978,142.5 977,142.5 976,142.5 975,142.5 974,142.6 973,142.6 972,142.8 971,142.7 970,143.5 969,144.2 968,144.4 967,146.1 966,148.5 965,148.5 964,142.5 963,142.5 962,142.5 961,142.5 960,142.5 959,142.5 958,142.5 957,142.5 956,142.5 955,142.5 954,142.5 953,142.5 952,142.5 951,142.5 950,142.5 949,142.5 948,142.5 947,142.5 946,142.5 945,142.5 944,142.5 943,142.5 942,142.5 941,142.5 940,142.5 939,142.5 938,142.9 937,143.2 936,144.0 935,145.5 934,145.5 933,142.5 932,142.5 931,142.5 930,142.5 929,142.5 928,142.5 927,142.5 926,142.5 925,142.5 924,142.5 923,142.5 922,142.5 921,142.5 920,142.5 919,142.5 918,142.5 917,142.5 916,142.5 915,142.5 914,142.5 913,142.5 912,142.5 911,142.5 910,142.7 909,142.9 908,143.2 907,143.0 906,143.4 905,144.3 904,147.5 903,147.5 902,142.5 901,142.5 900,142.5 899,142.5 898,142.5 897,142.5 896,142.5 895,142.5 894,142.5 893,143.5 892,143.5 891,142.5 890,142.5 889,142.5 888,142.5 887,142.5 886,142.5 885,142.5 884,142.5 883,142.5 882,142.5 881,142.5 880,142.5 879,142.5 878,142.5 877,142.6 876,142.5 875,142.6 874,142.7 873,143.6 872,143.4 871,144.8 870,145.3 869,148.5 868,148.5 867,142.5 866,142.5 865,142.5 864,142.5 863,142.5 862,142.5 861,142.5 860,142.5 859,142.5 858,142.5 857,142.5 856,142.5 855,142.5 854,142.7 853,142.8 852,143.3 851,143.8 850,143.4 849,145.2 848,147.5 847,147.5 846,142.5 845,142.6 844,142.5 843,143.1 842,142.8 841,143.3 840,143.7 839,143.4 838,143.8 837,143.7 836,144.2 835,144.6 834,143.9 833,144.6 832,145.3 831,146.7 830,147.9 829,148.7 828,154.5 827,154.5 826,142.5 825,142.5 824,142.5 823,142.7 822,142.5 821,142.8 820,142.6 819,142.9 818,143.9 817,144.0 816,144.8 815,147.5 814,147.5 813,143.9 812,143.5 811,144.0 810,144.0 809,143.7 808,144.8 807,144.1 806,145.5 805,145.4 804,146.2 803,144.9 802,145.3 801,145.2 800,146.3 799,147.3 798,147.1 797,147.7 796,151.9 795,152.2 794,159.5 793,159.5 792,144.5 791,143.9 790,144.9 789,145.1 788,144.8 787,146.0 786,145.9 785,146.7 784,149.6 783,155.5 782,155.5 781,142.5 780,142.5 779,142.5 778,142.5 777,142.5 776,142.5 775,142.5 774,142.5 773,143.5 772,143.5 771,142.5 770,142.5 769,142.5 768,142.5 767,142.5 766,142.5 765,142.5 764,142.5 763,143.0 762,143.7 761,145.5 760,145.5 759,142.5 758,142.5 757,142.5 756,142.5 755,142.5 754,142.5 753,142.5 752,142.5 751,142.5 750,142.5 749,142.5 748,142.5 747,142.5 746,142.5 745,142.5 744,142.5 743,142.5 742,143.5 741,143.5 740,142.5 739,142.5 738,142.5 737,142.5 736,142.5 735,142.5 734,142.5 733,142.7 732,143.2 731,143.1 730,144.9 729,146.5 728,146.5 727,142.5 726,142.5 725,142.5 724,142.5 723,142.5 722,142.5 721,142.5 720,143.3 719,143.9 718,145.5 717,145.5 716,142.5 715,142.5 714,142.5 713,142.5 712,142.5 711,142.5 710,142.5 709,142.5 708,142.7 707,142.5 706,142.7 705,142.7 704,143.3 703,143.2 702,143.1 701,143.5 700,144.4 699,144.7 698,144.7 697,145.3 696,146.2 695,151.5 694,151.5 693,142.5 692,142.5 691,142.5 690,142.5 689,142.9 688,142.9 687,144.5 686,144.5 685,142.5 684,142.5 683,142.5 682,142.5 681,142.5 680,142.5 679,142.5 678,142.5 677,142.5 676,142.5 675,143.0 674,143.0 673,142.5 672,142.5 671,142.5 670,142.5 669,142.5 668,142.5 667,142.5 666,142.7 665,142.8 664,142.9 663,143.0 662,143.1 661,143.1 660,143.5 659,144.1 658,144.2 657,144.0 656,144.4 655,145.4 654,148.7 653,151.5 652,151.5 651,142.5 650,142.5 649,142.5 648,142.5 647,142.5 646,142.5 645,142.5 644,142.5 643,143.5 642,143.5 641,142.5 640,142.5 639,142.5 638,142.5 637,142.5 636,142.5 635,142.5 634,142.5 633,142.5 632,142.5 631,142.8 630,142.8 629,143.1 628,143.2 627,142.8 626,143.3 625,143.6 624,144.5 623,144.3 622,145.7 621,147.9 620,150.5 619,150.5 618,142.5 617,142.5 616,142.5 615,142.5 614,142.5 613,142.5 612,142.5 611,142.5 610,142.5 609,142.5 608,142.5 607,142.5 606,142.5 605,142.5 604,142.5 603,142.5 602,142.5 601,142.5 600,142.5 599,142.5 598,142.5 597,142.5 596,142.5 595,142.5 594,142.5 593,142.6 592,142.6 591,142.9 590,144.2 589,145.5 588,145.5 587,142.5 586,142.5 585,142.5 584,142.5 583,142.5 582,142.5 581,142.5 580,142.5 579,142.5 578,142.5 577,142.5 576,142.5 575,142.5 574,142.5 573,142.7 572,142.5 571,143.0 570,143.2 569,142.8 568,143.1 567,143.8 566,144.1 565,144.0 564,144.5 563,144.8 562,144.4 561,144.1 560,144.4 559,145.0 558,147.6 557,146.6 556,148.7 555,154.5 554,154.5 553,142.5 552,142.5 551,142.5 550,142.5 549,142.5 548,142.5 547,142.5 546,142.5 545,142.5 544,142.5 543,142.5 542,142.5 541,142.5 540,142.5 539,142.5 538,142.5 537,142.5 536,142.5 535,142.5 534,142.5 533,142.5 532,142.5 531,142.5 530,142.5 529,142.5 528,142.5 527,142.6 526,143.0 525,143.3 524,143.2 523,144.2 522,144.7 521,147.5 520,147.5 519,142.5 518,142.5 517,142.5 516,142.5 515,142.5 514,142.5 513,142.5 512,142.5 511,142.5 510,142.5 509,142.7 508,142.8 507,143.2 506,143.1 505,143.2 504,143.3 503,144.6 502,144.9 501,148.5 500,148.5 499,143.0 498,143.8 497,143.8 496,144.0 495,144.3 494,143.9 493,143.5 492,144.5 491,144.6 490,145.6 489,145.5 488,144.5 487,144.8 486,147.0 485,147.5 484,148.4 483,147.7 482,148.5 481,149.3 480,158.5 479,158.5 478,142.5 477,142.5 476,142.5 475,142.5 474,142.7 473,142.7 472,142.8 471,142.9 470,143.3 469,143.7 468,146.5 467,146.5 466,143.1 465,143.6 464,143.9 463,143.8 462,144.3 461,143.6 460,144.7 459,144.7 458,145.6 457,145.9 456,145.7 455,146.4 454,147.0 453,147.7 452,146.8 451,146.8 450,148.9 449,149.4 448,158.5 447,158.5 446,143.7 445,144.0 444,143.6 443,143.8 442,144.8 441,146.0 440,145.2 439,147.0 438,148.6 437,149.2 436,154.5 435,154.5 434,143.3 433,143.3 432,144.0 431,144.4 430,144.8 429,144.7 428,145.0 427,145.9 426,151.5 425,151.5 424,142.5 423,142.5 422,142.5 421,142.5 420,142.5 419,142.5 418,142.5 417,142.5 416,142.6 415,143.5 414,143.5 413,142.5 412,142.5 411,142.5 410,142.5 409,142.5 408,142.5 407,142.5 406,142.5 405,142.5 404,142.5 403,142.5 402,142.5 401,142.5 400,142.5 399,142.5 398,142.5 397,142.5 396,142.5 395,142.5 394,142.5 393,142.5 392,142.5 391,142.5 390,142.5 389,142.5 388,142.7 387,142.9 386,143.2 385,143.5 384,144.4 383,144.2 382,147.5 381,147.5 380,142.5 379,142.5 378,142.5 377,142.5 376,142.5 375,142.5 374,142.5 373,142.5 372,142.5 371,143.4 370,144.5 369,144.5 368,142.5 367,142.5 366,142.5 365,142.5 364,142.5 363,142.5 362,142.9 361,142.8 360,143.1 359,143.0 358,143.7 357,143.6 356,144.2 355,144.5 354,144.7 353,144.4 352,145.7 351,146.5 350,150.1 349,153.5 348,153.5 347,142.5 346,142.5 345,142.5 344,142.9 343,142.8 342,144.5 341,144.5 340,142.5 339,142.5 338,142.5 337,142.5 336,142.5 335,142.5 334,142.5 333,142.5 332,142.7 331,142.5 330,143.0 329,142.8 328,142.7 327,143.1 326,143.3 325,142.8 324,143.2 323,143.1 322,143.6 321,143.5 320,144.1 319,144.0 318,144.9 317,144.4 316,144.7 315,144.7 314,144.7 313,145.2 312,145.4 311,146.1 310,147.5 309,147.0 308,148.6 307,153.7 306,158.5 305,158.5 304,142.5 303,142.5 302,142.5 301,142.5 300,142.5 299,142.5 298,142.5 297,142.5 296,142.5 295,142.5 294,142.5 293,142.5 292,142.5 291,142.5 290,142.5 289,142.5 288,142.5 287,142.5 286,142.5 285,142.5 284,142.5 283,142.5 282,142.5 281,142.5 280,142.5 279,142.6 278,143.1 277,142.8 276,143.2 275,144.4 274,145.6 273,147.5 272,147.5 271,142.5 270,142.5 269,142.5 268,142.5 267,142.5 266,142.5 265,142.5 264,142.5 263,142.5 262,142.5 261,142.5 260,142.5 259,142.5 258,142.5 257,142.5 256,142.5 255,142.5 254,142.5 253,142.5 252,142.5 251,142.5 250,142.5 249,142.5 248,142.5 247,142.5 246,142.5 245,142.5 244,142.8 243,142.7 242,143.8 241,144.0 240,146.5 239,146.5 238,142.5 237,142.5 236,142.5 235,142.5 234,142.5 233,142.5 232,142.5 231,142.5 230,142.5 229,142.5 228,142.5 227,142.5 226,142.5 225,142.5 224,142.5 223,142.5 222,142.5 221,142.5 220,142.5 219,142.5 218,142.5 217,142.5 216,142.5 215,142.5 214,142.9 213,143.1 212,143.3 211,143.0 210,143.6 209,143.9 208,145.4 207,148.5 206,148.5 205,142.5 204,142.5 203,142.5 202,142.5 201,142.5 200,142.5 199,142.5 198,143.5 197,143.5 196,142.5 195,142.5 194,142.5 193,142.5 192,142.5 191,142.5 190,142.5 189,142.5 188,142.5 187,142.5 186,142.5 185,142.5 184,142.5 183,142.5 182,142.5 181,142.6 180,142.9 179,143.3 178,143.4 177,143.5 176,144.9 175,144.5 174,148.5 173,148.5 172,142.5 171,142.5 170,142.5 169,142.5 168,142.5 167,142.5 166,142.5 165,142.6 164,142.7 163,143.4 162,143.7 161,143.5 160,144.3 159,144.2 158,144.8 157,146.0 156,144.9 155,146.2 154,151.5 153,151.5 152,142.7 151,142.9 150,143.0 149,143.3 148,143.5 147,143.7 146,144.1 145,144.9 144,145.3 143,145.1 142,149.5 141,149.5 140,145.0 139,145.7 138,144.9 137,145.7 136,146.0 135,147.9 134,149.8 133,152.5 132,156.5 131,156.5 130,142.7 129,142.5 128,142.7 127,142.9 126,143.0 125,143.1 124,143.9 123,144.8 122,144.2 121,145.8 120,149.5 119,149.5 118,142.7 117,143.0 116,143.3 115,143.1 114,143.1 113,143.3 112,143.0 111,143.5 110,144.1 109,144.2 108,144.0 107,144.3 106,144.5 105,144.7 104,146.9 103,147.5 102,147.0 101,148.4 100,155.5 99,155.5 98,142.5 97,142.5 96,142.5 95,142.5 94,142.5 93,142.5 92,142.5 91,142.5 90,142.5 89,143.5 88,143.5 87,142.5 86,142.5 85,142.5 84,142.5 83,142.5 82,142.5 81,142.5 80,142.5 79,142.5 78,142.5 77,142.5 76,142.5 75,142.5 74,142.5 73,142.5 72,142.5 71,142.5 70,142.5 69,142.5 68,142.5 67,142.7 66,143.5 65,143.5 64,142.9 63,142.8 62,142.9 61,142.8 60,143.2 59,143.4 58,143.1 57,143.4 56,143.7 55,143.5 54,143.8 53,144.3 52,143.8 51,143.8 50,144.0 49,145.0 48,144.9 47,145.7 46,145.9 45,145.3 44,147.1 43,146.2 42,146.1 41,146.6 40,147.6 39,150.6 38,148.5 37,155.5 36,160.0 35,160.0 34,142.5 33,142.5 32,142.5 31,142.5 30,142.5 29,142.5 28,142.5 27,142.5 26,143.2 25,143.2 24,144.0 23,146.5 22,146.5 21,142.5 20,142.5 19,142.5 18,142.5 17,142.5 16,142.5 15,142.5 14,142.5 13,142.5 12,142.5 11,142.5 10,142.5 9,142.5 8,142.5 7,142.5 6,142.5 5,142.5" fill="#a2a3a7"/><rect x="539" y="123" width="4" height="37.5" fill="#f0b02a"/><rect x="663" y="123" width="4" height="37.5" fill="#f0b02a"/><rect x="586" y="123" width="1.2" height="37.5" fill="#e3262d"/></svg>
<div style="left:4px;top:162px;width:1385px;height:414px;background:#393b44;"></div>
<svg style="position:absolute;left:0px;top:0px;" width="1389" height="200" viewBox="0 0 1389 200"><rect x="113.9" y="190" width="1.3" height="5" fill="#c8c9cd"/><rect x="189.7" y="190" width="1.3" height="5" fill="#c8c9cd"/><rect x="265.5" y="190" width="1.3" height="5" fill="#c8c9cd"/><rect x="341.3" y="190" width="1.3" height="5" fill="#c8c9cd"/><rect x="417.1" y="190" width="1.3" height="5" fill="#c8c9cd"/><rect x="492.9" y="181" width="1.3" height="14" fill="#c8c9cd"/><rect x="568.7" y="190" width="1.3" height="5" fill="#c8c9cd"/><rect x="644.5" y="190" width="1.3" height="5" fill="#c8c9cd"/><rect x="720.3" y="190" width="1.3" height="5" fill="#c8c9cd"/><rect x="796.1" y="190" width="1.3" height="5" fill="#c8c9cd"/><rect x="871.9" y="190" width="1.3" height="5" fill="#c8c9cd"/><rect x="947.7" y="190" width="1.3" height="5" fill="#c8c9cd"/><rect x="1023.5" y="190" width="1.3" height="5" fill="#c8c9cd"/><rect x="1099.3" y="190" width="1.3" height="5" fill="#c8c9cd"/><rect x="1175.1" y="190" width="1.3" height="5" fill="#c8c9cd"/><rect x="1250.9" y="181" width="1.3" height="14" fill="#c8c9cd"/><rect x="1326.7" y="190" width="1.3" height="5" fill="#c8c9cd"/><rect x="85" y="194" width="1271" height="1" fill="#6d6f76"/></svg>
<svg style="position:absolute;left:536.5px;top:177.5px;" width="12" height="18" viewBox="0 0 12 18"><path d="M6 0.5 A5.5 5.5 0 0 1 11.5 6 V10 L6 17 L0.5 10 V6 A5.5 5.5 0 0 1 6 0.5Z" fill="#e5161d"/></svg>
<div class="t" style="left:497.5px;top:179.5px;font-size:9.6px;line-height:12px;color:#c8c9cd;">00:00:08:000</div>
<div class="t" style="left:1255.5px;top:179.5px;font-size:9.6px;line-height:12px;color:#c8c9cd;">00:00:09:000</div>
<div class="t" style="right:1456px;top:197.5px;font-size:9.9px;line-height:13px;color:#c5c6ca;">20000</div>
<div class="t" style="right:1456px;top:230.0px;font-size:9.9px;line-height:13px;color:#c5c6ca;">10000</div>
<div class="t" style="right:1456px;top:270.5px;font-size:9.9px;line-height:13px;color:#c5c6ca;">4000</div>
<div class="t" style="right:1456px;top:297.5px;font-size:9.9px;line-height:13px;color:#c5c6ca;">2000</div>
<div class="t" style="right:1456px;top:319.5px;font-size:9.9px;line-height:13px;color:#c5c6ca;">1000</div>
<div class="t" style="right:1456px;top:336.5px;font-size:9.9px;line-height:13px;color:#c5c6ca;">500</div>
<div class="t" style="right:1456px;top:363.5px;font-size:9.9px;line-height:13px;color:#c5c6ca;">0</div>
<svg style="position:absolute;left:0px;top:0px;" width="90" height="560" viewBox="0 0 90 560"><rect x="78" y="203.5" width="6" height="1" fill="#8a8c92"/><rect x="78" y="236.0" width="6" height="1" fill="#8a8c92"/><rect x="78" y="276.5" width="6" height="1" fill="#8a8c92"/><rect x="78" y="303.5" width="6" height="1" fill="#8a8c92"/><rect x="78" y="325.5" width="6" height="1" fill="#8a8c92"/><rect x="78" y="342.5" width="6" height="1" fill="#8a8c92"/><rect x="78" y="369.5" width="6" height="1" fill="#8a8c92"/></svg>
<div style="left:12px;top:273px;width:20px;height:20px;background:#4a4c55;"></div>
<svg style="position:absolute;left:12px;top:273px;" width="20" height="20" viewBox="0 0 20 20"><path d="M4.5 4.5 V16.5 H16.5 V4.5 M4.5 4.5 H16.5" stroke="#9a9ca2" stroke-width="1" fill="none"/><rect x="2.5" y="2.5" width="4" height="4" fill="#e2b63c"/><rect x="14.5" y="2.5" width="4" height="4" fill="#8a8c92"/></svg>
<svg style="position:absolute;left:35px;top:277px;" width="8" height="14" viewBox="0 0 8 14"><path d="M0.5 6 L4 0.5 L7.5 6Z M0.5 8 L4 13.5 L7.5 8Z" fill="#c5c6ca"/></svg>
<div class="t" style="right:1456px;top:381.5px;font-size:9.9px;line-height:13px;color:#c5c6ca;">20000</div>
<div class="t" style="right:1456px;top:414.0px;font-size:9.9px;line-height:13px;color:#c5c6ca;">10000</div>
<div class="t" style="right:1456px;top:454.5px;font-size:9.9px;line-height:13px;color:#c5c6ca;">4000</div>
<div class="t" style="right:1456px;top:481.5px;font-size:9.9px;line-height:13px;color:#c5c6ca;">2000</div>
<div class="t" style="right:1456px;top:503.5px;font-size:9.9px;line-height:13px;color:#c5c6ca;">1000</div>
<div class="t" style="right:1456px;top:520.5px;font-size:9.9px;line-height:13px;color:#c5c6ca;">500</div>
<div class="t" style="right:1456px;top:547.5px;font-size:9.9px;line-height:13px;color:#c5c6ca;">0</div>
<svg style="position:absolute;left:0px;top:0px;" width="90" height="560" viewBox="0 0 90 560"><rect x="78" y="387.5" width="6" height="1" fill="#8a8c92"/><rect x="78" y="420.0" width="6" height="1" fill="#8a8c92"/><rect x="78" y="460.5" width="6" height="1" fill="#8a8c92"/><rect x="78" y="487.5" width="6" height="1" fill="#8a8c92"/><rect x="78" y="509.5" width="6" height="1" fill="#8a8c92"/><rect x="78" y="526.5" width="6" height="1" fill="#8a8c92"/><rect x="78" y="553.5" width="6" height="1" fill="#8a8c92"/></svg>
<div style="left:12px;top:457px;width:20px;height:20px;background:#4a4c55;"></div>
<svg style="position:absolute;left:12px;top:457px;" width="20" height="20" viewBox="0 0 20 20"><path d="M4.5 4.5 V16.5 H16.5 V4.5 M4.5 4.5 H16.5" stroke="#9a9ca2" stroke-width="1" fill="none"/><rect x="2.5" y="2.5" width="4" height="4" fill="#8a8c92"/><rect x="14.5" y="2.5" width="4" height="4" fill="#e2b63c"/></svg>
<svg style="position:absolute;left:35px;top:461px;" width="8" height="14" viewBox="0 0 8 14"><path d="M0.5 6 L4 0.5 L7.5 6Z M0.5 8 L4 13.5 L7.5 8Z" fill="#c5c6ca"/></svg>
<svg style="position:absolute;left:85px;top:195px;" width="1271" height="360" viewBox="0 0 1271 360"><defs>
<filter id="b1" x="-50%" y="0%" width="200%" height="100%"><feGaussianBlur stdDeviation="1.2 0"/></filter>
<linearGradient id="colh" x1="0" y1="0" x2="1" y2="0"><stop offset="0" stop-color="#204470"/><stop offset="0.3" stop-color="#14304f"/><stop offset="0.7" stop-color="#081626"/><stop offset="1" stop-color="#000"/></linearGradient>
<filter id="b4" x="-30%" y="-80%" width="160%" height="260%"><feGaussianBlur stdDeviation="4.5 2"/></filter>
<filter id="b10" x="-30%" y="-30%" width="160%" height="160%"><feGaussianBlur stdDeviation="9"/></filter>
<linearGradient id="colg" x1="0" y1="0" x2="0" y2="1"><stop offset="0" stop-color="#1a3a5f"/><stop offset="0.5" stop-color="#214a76"/><stop offset="1" stop-color="#2b5b90"/></linearGradient>
<linearGradient id="envg" gradientUnits="userSpaceOnUse" x1="0" y1="0" x2="0" y2="176"><stop offset="0" stop-color="#0c1c30"/><stop offset="0.3" stop-color="#163251"/><stop offset="0.55" stop-color="#1e4269"/><stop offset="0.75" stop-color="#234b7b"/><stop offset="0.9" stop-color="#2e6097"/><stop offset="1" stop-color="#3064a0"/></linearGradient>
<linearGradient id="baseg" x1="0" y1="0" x2="0" y2="1"><stop offset="0" stop-color="#000"/><stop offset="0.5" stop-color="#1a3b60"/><stop offset="1" stop-color="#285a8e"/></linearGradient>
<filter id="streak" x="0" y="0" width="100%" height="100%" filterUnits="objectBoundingBox"><feTurbulence type="fractalNoise" baseFrequency="0.012 0.5" numOctaves="2" seed="5"/><feColorMatrix type="matrix" values="0 0 0 0 0  0 0 0 0 0  0 0 0 0 0  1.5 0 0 0 -0.5"/></filter>
<pattern id="stri" width="8" height="4" patternUnits="userSpaceOnUse"><rect y="3" width="8" height="1" fill="#000" opacity="0.1"/></pattern>
<g id="ch"><rect x="0" y="0" width="1271" height="176" fill="#000"/><g><rect x="0" y="95" width="1271" height="81" fill="url(#baseg)" filter="url(#b10)" style="mix-blend-mode:lighten"/><polygon points="-145.0,0.0 -129.0,0.0 -126.6,8.0 -123.9,16.0 -120.8,24.0 -117.2,32.0 -113.1,40.0 -108.4,48.0 -103.0,56.0 -96.8,64.0 -89.6,72.0 -81.4,80.0 -72.0,88.0 -61.3,96.0 -48.9,104.0 -34.7,112.0 -18.3,120.0 -13.0,128.0 -13.0,136.0 -13.0,144.0 -13.0,152.0 -13.0,160.0 -13.0,168.0 -13.0,176.0 -145.0,176.0" fill="url(#envg)" opacity="0.80" filter="url(#b10)" style="mix-blend-mode:lighten"/><polygon points="-145.0,0.0 -115.0,0.0 -110.6,8.0 -105.5,16.0 -99.6,24.0 -92.9,32.0 -85.2,40.0 -76.4,48.0 -66.2,56.0 -54.6,64.0 -41.2,72.0 -25.8,80.0 -8.2,88.0 12.0,96.0 35.2,104.0 61.9,112.0 92.5,120.0 102.5,128.0 102.5,136.0 102.5,144.0 102.5,152.0 102.5,160.0 102.5,168.0 102.5,176.0 -145.0,176.0" fill="url(#envg)" opacity="0.56" filter="url(#b10)" style="mix-blend-mode:lighten"/><polygon points="-145.0,0.0 -99.0,0.0 -92.2,8.0 -84.4,16.0 -75.4,24.0 -65.1,32.0 -53.3,40.0 -39.8,48.0 -24.2,56.0 -6.3,64.0 14.2,72.0 37.7,80.0 64.7,88.0 95.8,96.0 131.4,104.0 172.2,112.0 219.2,120.0 234.5,128.0 234.5,136.0 234.5,144.0 234.5,152.0 234.5,160.0 234.5,168.0 234.5,176.0 -145.0,176.0" fill="url(#envg)" opacity="0.30" filter="url(#b10)" style="mix-blend-mode:lighten"/><polygon points="20.0,0.0 28.0,0.0 29.2,8.0 30.5,16.0 32.1,24.0 33.9,32.0 35.9,40.0 38.3,48.0 41.0,56.0 44.1,64.0 47.7,72.0 51.8,80.0 56.5,88.0 61.9,96.0 68.1,104.0 75.2,112.0 83.3,120.0 92.7,128.0 103.5,136.0 115.8,144.0 120.0,152.0 120.0,160.0 120.0,168.0 120.0,176.0 20.0,176.0" fill="url(#envg)" opacity="0.60" filter="url(#b10)" style="mix-blend-mode:lighten"/><polygon points="20.0,0.0 35.0,0.0 37.2,8.0 39.8,16.0 42.7,24.0 46.0,32.0 49.9,40.0 54.3,48.0 59.4,56.0 65.2,64.0 71.9,72.0 79.6,80.0 88.4,88.0 98.5,96.0 110.1,104.0 123.4,112.0 138.7,120.0 156.3,128.0 176.5,136.0 199.6,144.0 207.5,152.0 207.5,160.0 207.5,168.0 207.5,176.0 20.0,176.0" fill="url(#envg)" opacity="0.42" filter="url(#b10)" style="mix-blend-mode:lighten"/><polygon points="20.0,0.0 43.0,0.0 46.4,8.0 50.3,16.0 54.8,24.0 59.9,32.0 65.8,40.0 72.6,48.0 80.4,56.0 89.3,64.0 99.6,72.0 111.4,80.0 124.9,88.0 140.4,96.0 158.2,104.0 178.6,112.0 202.1,120.0 229.0,128.0 259.9,136.0 295.4,144.0 307.5,152.0 307.5,160.0 307.5,168.0 307.5,176.0 20.0,176.0" fill="url(#envg)" opacity="0.23" filter="url(#b10)" style="mix-blend-mode:lighten"/><polygon points="132.0,0.0 145.2,0.0 147.2,8.0 149.4,16.0 152.0,24.0 154.9,32.0 158.3,40.0 162.2,48.0 166.7,56.0 171.8,64.0 177.7,72.0 184.4,80.0 192.2,88.0 201.1,96.0 211.3,104.0 223.0,112.0 236.5,120.0 252.0,128.0 260.0,136.0 260.0,144.0 260.0,152.0 260.0,160.0 260.0,168.0 260.0,176.0 132.0,176.0" fill="url(#envg)" opacity="1.00" filter="url(#b10)" style="mix-blend-mode:lighten"/><polygon points="132.0,0.0 156.8,0.0 160.4,8.0 164.6,16.0 169.4,24.0 175.0,32.0 181.3,40.0 188.6,48.0 197.0,56.0 206.6,64.0 217.6,72.0 230.3,80.0 244.9,88.0 261.5,96.0 280.7,104.0 302.7,112.0 327.9,120.0 356.9,128.0 372.0,136.0 372.0,144.0 372.0,152.0 372.0,160.0 372.0,168.0 372.0,176.0 132.0,176.0" fill="url(#envg)" opacity="0.70" filter="url(#b10)" style="mix-blend-mode:lighten"/><polygon points="132.0,0.0 169.9,0.0 175.6,8.0 182.0,16.0 189.4,24.0 197.9,32.0 207.6,40.0 218.8,48.0 231.7,56.0 246.4,64.0 263.3,72.0 282.7,80.0 305.0,88.0 330.6,96.0 360.0,104.0 393.7,112.0 432.4,120.0 476.9,128.0 500.0,136.0 500.0,144.0 500.0,152.0 500.0,160.0 500.0,168.0 500.0,176.0 132.0,176.0" fill="url(#envg)" opacity="0.38" filter="url(#b10)" style="mix-blend-mode:lighten"/><polygon points="255.0,0.0 262.2,0.0 263.3,8.0 264.5,16.0 265.9,24.0 267.5,32.0 269.3,40.0 271.5,48.0 273.9,56.0 276.7,64.0 279.9,72.0 283.6,80.0 287.8,88.0 292.7,96.0 298.3,104.0 304.7,112.0 312.0,120.0 320.4,128.0 330.1,136.0 335.0,144.0 335.0,152.0 335.0,160.0 335.0,168.0 335.0,176.0 255.0,176.0" fill="url(#envg)" opacity="0.60" filter="url(#b10)" style="mix-blend-mode:lighten"/><polygon points="255.0,0.0 268.5,0.0 270.5,8.0 272.8,16.0 275.4,24.0 278.4,32.0 281.9,40.0 285.9,48.0 290.5,56.0 295.7,64.0 301.7,72.0 308.6,80.0 316.6,88.0 325.7,96.0 336.1,104.0 348.1,112.0 361.9,120.0 377.7,128.0 395.8,136.0 405.0,144.0 405.0,152.0 405.0,160.0 405.0,168.0 405.0,176.0 255.0,176.0" fill="url(#envg)" opacity="0.42" filter="url(#b10)" style="mix-blend-mode:lighten"/><polygon points="255.0,0.0 275.7,0.0 278.8,8.0 282.3,16.0 286.3,24.0 290.9,32.0 296.3,40.0 302.4,48.0 309.4,56.0 317.4,64.0 326.6,72.0 337.2,80.0 349.4,88.0 363.3,96.0 379.4,104.0 397.8,112.0 418.9,120.0 443.1,128.0 470.9,136.0 485.0,144.0 485.0,152.0 485.0,160.0 485.0,168.0 485.0,176.0 255.0,176.0" fill="url(#envg)" opacity="0.23" filter="url(#b10)" style="mix-blend-mode:lighten"/><polygon points="445.0,0.0 449.0,0.0 449.6,8.0 450.3,16.0 451.1,24.0 451.9,32.0 453.0,40.0 454.2,48.0 455.5,56.0 457.1,64.0 458.8,72.0 460.9,80.0 461.0,88.0 461.0,96.0 461.0,104.0 461.0,112.0 461.0,120.0 461.0,128.0 461.0,136.0 461.0,144.0 461.0,152.0 461.0,160.0 461.0,168.0 461.0,176.0 445.0,176.0" fill="url(#envg)" opacity="0.60" filter="url(#b10)" style="mix-blend-mode:lighten"/><polygon points="445.0,0.0 452.5,0.0 453.6,8.0 454.9,16.0 456.3,24.0 458.0,32.0 459.9,40.0 462.2,48.0 464.7,56.0 467.6,64.0 471.0,72.0 474.8,80.0 475.0,88.0 475.0,96.0 475.0,104.0 475.0,112.0 475.0,120.0 475.0,128.0 475.0,136.0 475.0,144.0 475.0,152.0 475.0,160.0 475.0,168.0 475.0,176.0 445.0,176.0" fill="url(#envg)" opacity="0.42" filter="url(#b10)" style="mix-blend-mode:lighten"/><polygon points="445.0,0.0 456.5,0.0 458.2,8.0 460.2,16.0 462.4,24.0 465.0,32.0 467.9,40.0 471.3,48.0 475.2,56.0 479.7,64.0 484.8,72.0 490.7,80.0 491.0,88.0 491.0,96.0 491.0,104.0 491.0,112.0 491.0,120.0 491.0,128.0 491.0,136.0 491.0,144.0 491.0,152.0 491.0,160.0 491.0,168.0 491.0,176.0 445.0,176.0" fill="url(#envg)" opacity="0.23" filter="url(#b10)" style="mix-blend-mode:lighten"/><polygon points="468.0,0.0 481.6,0.0 483.6,8.0 485.9,16.0 488.6,24.0 491.6,32.0 495.1,40.0 499.1,48.0 503.7,56.0 509.0,64.0 515.1,72.0 522.0,80.0 530.0,88.0 532.0,96.0 532.0,104.0 532.0,112.0 532.0,120.0 532.0,128.0 532.0,136.0 532.0,144.0 532.0,152.0 532.0,160.0 532.0,168.0 532.0,176.0 468.0,176.0" fill="url(#envg)" opacity="1.00" filter="url(#b10)" style="mix-blend-mode:lighten"/><polygon points="468.0,0.0 493.5,0.0 497.3,8.0 501.6,16.0 506.6,24.0 512.3,32.0 518.8,40.0 526.3,48.0 535.0,56.0 544.9,64.0 556.2,72.0 569.3,80.0 584.3,88.0 588.0,96.0 588.0,104.0 588.0,112.0 588.0,120.0 588.0,128.0 588.0,136.0 588.0,144.0 588.0,152.0 588.0,160.0 588.0,168.0 588.0,176.0 468.0,176.0" fill="url(#envg)" opacity="0.70" filter="url(#b10)" style="mix-blend-mode:lighten"/><polygon points="468.0,0.0 507.1,0.0 512.9,8.0 519.5,16.0 527.1,24.0 535.9,32.0 545.9,40.0 557.5,48.0 570.7,56.0 585.9,64.0 603.3,72.0 623.3,80.0 646.3,88.0 652.0,96.0 652.0,104.0 652.0,112.0 652.0,120.0 652.0,128.0 652.0,136.0 652.0,144.0 652.0,152.0 652.0,160.0 652.0,168.0 652.0,176.0 468.0,176.0" fill="url(#envg)" opacity="0.38" filter="url(#b10)" style="mix-blend-mode:lighten"/><polygon points="791.0,0.0 795.0,0.0 795.6,8.0 796.3,16.0 797.1,24.0 797.9,32.0 799.0,40.0 800.2,48.0 801.0,56.0 801.0,64.0 801.0,72.0 801.0,80.0 801.0,88.0 801.0,96.0 801.0,104.0 801.0,112.0 801.0,120.0 801.0,128.0 801.0,136.0 801.0,144.0 801.0,152.0 801.0,160.0 801.0,168.0 801.0,176.0 791.0,176.0" fill="url(#envg)" opacity="0.55" filter="url(#b10)" style="mix-blend-mode:lighten"/><polygon points="791.0,0.0 798.5,0.0 799.6,8.0 800.9,16.0 802.3,24.0 804.0,32.0 805.9,40.0 808.2,48.0 809.8,56.0 809.8,64.0 809.8,72.0 809.8,80.0 809.8,88.0 809.8,96.0 809.8,104.0 809.8,112.0 809.8,120.0 809.8,128.0 809.8,136.0 809.8,144.0 809.8,152.0 809.8,160.0 809.8,168.0 809.8,176.0 791.0,176.0" fill="url(#envg)" opacity="0.39" filter="url(#b10)" style="mix-blend-mode:lighten"/><polygon points="791.0,0.0 802.5,0.0 804.2,8.0 806.2,16.0 808.4,24.0 811.0,32.0 813.9,40.0 817.3,48.0 819.8,56.0 819.8,64.0 819.8,72.0 819.8,80.0 819.8,88.0 819.8,96.0 819.8,104.0 819.8,112.0 819.8,120.0 819.8,128.0 819.8,136.0 819.8,144.0 819.8,152.0 819.8,160.0 819.8,168.0 819.8,176.0 791.0,176.0" fill="url(#envg)" opacity="0.21" filter="url(#b10)" style="mix-blend-mode:lighten"/><polygon points="812.0,0.0 827.2,0.0 829.4,8.0 832.0,16.0 835.0,24.0 838.4,32.0 842.3,40.0 846.8,48.0 851.9,56.0 857.8,64.0 864.6,72.0 872.4,80.0 881.3,88.0 891.6,96.0 903.3,104.0 912.0,112.0 912.0,120.0 912.0,128.0 912.0,136.0 912.0,144.0 912.0,152.0 912.0,160.0 912.0,168.0 912.0,176.0 812.0,176.0" fill="url(#envg)" opacity="1.00" filter="url(#b10)" style="mix-blend-mode:lighten"/><polygon points="812.0,0.0 840.5,0.0 844.7,8.0 849.6,16.0 855.1,24.0 861.5,32.0 868.8,40.0 877.2,48.0 886.8,56.0 897.9,64.0 910.6,72.0 925.2,80.0 941.9,88.0 961.2,96.0 983.2,104.0 999.5,112.0 999.5,120.0 999.5,128.0 999.5,136.0 999.5,144.0 999.5,152.0 999.5,160.0 999.5,168.0 999.5,176.0 812.0,176.0" fill="url(#envg)" opacity="0.70" filter="url(#b10)" style="mix-blend-mode:lighten"/><polygon points="812.0,0.0 855.7,0.0 862.2,8.0 869.6,16.0 878.1,24.0 887.9,32.0 899.1,40.0 912.0,48.0 926.8,56.0 943.7,64.0 963.2,72.0 985.6,80.0 1011.3,88.0 1040.7,96.0 1074.6,104.0 1099.5,112.0 1099.5,120.0 1099.5,128.0 1099.5,136.0 1099.5,144.0 1099.5,152.0 1099.5,160.0 1099.5,168.0 1099.5,176.0 812.0,176.0" fill="url(#envg)" opacity="0.38" filter="url(#b10)" style="mix-blend-mode:lighten"/><polygon points="923.0,0.0 931.0,0.0 932.2,8.0 933.5,16.0 935.1,24.0 936.9,32.0 938.9,40.0 941.3,48.0 944.0,56.0 947.1,64.0 950.7,72.0 954.8,80.0 959.5,88.0 964.9,96.0 971.1,104.0 978.2,112.0 979.0,120.0 979.0,128.0 979.0,136.0 979.0,144.0 979.0,152.0 979.0,160.0 979.0,168.0 979.0,176.0 923.0,176.0" fill="url(#envg)" opacity="0.65" filter="url(#b10)" style="mix-blend-mode:lighten"/><polygon points="923.0,0.0 938.0,0.0 940.2,8.0 942.8,16.0 945.7,24.0 949.0,32.0 952.9,40.0 957.3,48.0 962.4,56.0 968.2,64.0 974.9,72.0 982.6,80.0 991.4,88.0 1001.5,96.0 1013.1,104.0 1026.4,112.0 1028.0,120.0 1028.0,128.0 1028.0,136.0 1028.0,144.0 1028.0,152.0 1028.0,160.0 1028.0,168.0 1028.0,176.0 923.0,176.0" fill="url(#envg)" opacity="0.45" filter="url(#b10)" style="mix-blend-mode:lighten"/><polygon points="923.0,0.0 946.0,0.0 949.4,8.0 953.3,16.0 957.8,24.0 962.9,32.0 968.8,40.0 975.6,48.0 983.4,56.0 992.3,64.0 1002.6,72.0 1014.4,80.0 1027.9,88.0 1043.4,96.0 1061.2,104.0 1081.6,112.0 1084.0,120.0 1084.0,128.0 1084.0,136.0 1084.0,144.0 1084.0,152.0 1084.0,160.0 1084.0,168.0 1084.0,176.0 923.0,176.0" fill="url(#envg)" opacity="0.25" filter="url(#b10)" style="mix-blend-mode:lighten"/><polygon points="1049.0,0.0 1057.8,0.0 1059.1,8.0 1060.6,16.0 1062.3,24.0 1064.3,32.0 1066.5,40.0 1069.1,48.0 1072.1,56.0 1075.5,64.0 1079.5,72.0 1084.0,80.0 1089.1,88.0 1095.1,96.0 1101.9,104.0 1109.7,112.0 1117.0,120.0 1117.0,128.0 1117.0,136.0 1117.0,144.0 1117.0,152.0 1117.0,160.0 1117.0,168.0 1117.0,176.0 1049.0,176.0" fill="url(#envg)" opacity="0.80" filter="url(#b10)" style="mix-blend-mode:lighten"/><polygon points="1049.0,0.0 1065.5,0.0 1067.9,8.0 1070.7,16.0 1074.0,24.0 1077.6,32.0 1081.9,40.0 1086.7,48.0 1092.3,56.0 1098.7,64.0 1106.1,72.0 1114.5,80.0 1124.2,88.0 1135.4,96.0 1148.1,104.0 1162.8,112.0 1176.5,120.0 1176.5,128.0 1176.5,136.0 1176.5,144.0 1176.5,152.0 1176.5,160.0 1176.5,168.0 1176.5,176.0 1049.0,176.0" fill="url(#envg)" opacity="0.56" filter="url(#b10)" style="mix-blend-mode:lighten"/><polygon points="1049.0,0.0 1074.3,0.0 1078.0,8.0 1082.3,16.0 1087.3,24.0 1092.9,32.0 1099.4,40.0 1106.9,48.0 1115.4,56.0 1125.3,64.0 1136.5,72.0 1149.5,80.0 1164.4,88.0 1181.4,96.0 1201.0,104.0 1223.5,112.0 1244.5,120.0 1244.5,128.0 1244.5,136.0 1244.5,144.0 1244.5,152.0 1244.5,160.0 1244.5,168.0 1244.5,176.0 1049.0,176.0" fill="url(#envg)" opacity="0.30" filter="url(#b10)" style="mix-blend-mode:lighten"/><polygon points="1162.0,0.0 1180.0,0.0 1182.7,8.0 1185.7,16.0 1189.2,24.0 1193.3,32.0 1197.9,40.0 1203.2,48.0 1209.3,56.0 1216.3,64.0 1224.3,72.0 1233.5,80.0 1242.0,88.0 1242.0,96.0 1242.0,104.0 1242.0,112.0 1242.0,120.0 1242.0,128.0 1242.0,136.0 1242.0,144.0 1242.0,152.0 1242.0,160.0 1242.0,168.0 1242.0,176.0 1162.0,176.0" fill="url(#envg)" opacity="1.00" filter="url(#b10)" style="mix-blend-mode:lighten"/><polygon points="1162.0,0.0 1195.8,0.0 1200.7,8.0 1206.5,16.0 1213.0,24.0 1220.6,32.0 1229.3,40.0 1239.2,48.0 1250.6,56.0 1263.7,64.0 1278.8,72.0 1296.1,80.0 1312.0,88.0 1312.0,96.0 1312.0,104.0 1312.0,112.0 1312.0,120.0 1312.0,128.0 1312.0,136.0 1312.0,144.0 1312.0,152.0 1312.0,160.0 1312.0,168.0 1312.0,176.0 1162.0,176.0" fill="url(#envg)" opacity="0.70" filter="url(#b10)" style="mix-blend-mode:lighten"/><polygon points="1162.0,0.0 1213.8,0.0 1221.4,8.0 1230.2,16.0 1240.3,24.0 1251.9,32.0 1265.1,40.0 1280.4,48.0 1297.9,56.0 1318.0,64.0 1341.1,72.0 1367.6,80.0 1392.0,88.0 1392.0,96.0 1392.0,104.0 1392.0,112.0 1392.0,120.0 1392.0,128.0 1392.0,136.0 1392.0,144.0 1392.0,152.0 1392.0,160.0 1392.0,168.0 1392.0,176.0 1162.0,176.0" fill="url(#envg)" opacity="0.38" filter="url(#b10)" style="mix-blend-mode:lighten"/><rect x="16" y="0" width="5.0" height="176" fill="url(#colg)" opacity="0.35" filter="url(#b1)" style="mix-blend-mode:lighten"/><rect x="16" y="0" width="26" height="176" fill="url(#colh)" opacity="0.28" style="mix-blend-mode:lighten"/><rect x="132" y="0" width="7.5" height="176" fill="url(#colg)" opacity="1.00" filter="url(#b1)" style="mix-blend-mode:lighten"/><rect x="132" y="0" width="50" height="176" fill="url(#colh)" opacity="0.80" style="mix-blend-mode:lighten"/><rect x="255" y="0" width="5.0" height="176" fill="url(#colg)" opacity="0.30" filter="url(#b1)" style="mix-blend-mode:lighten"/><rect x="255" y="0" width="18" height="176" fill="url(#colh)" opacity="0.24" style="mix-blend-mode:lighten"/><rect x="468" y="0" width="9.8" height="176" fill="url(#colg)" opacity="1.00" filter="url(#b1)" style="mix-blend-mode:lighten"/><rect x="468" y="0" width="65" height="176" fill="url(#colh)" opacity="0.80" style="mix-blend-mode:lighten"/><rect x="812" y="0" width="9.8" height="176" fill="url(#colg)" opacity="1.00" filter="url(#b1)" style="mix-blend-mode:lighten"/><rect x="812" y="0" width="65" height="176" fill="url(#colh)" opacity="0.80" style="mix-blend-mode:lighten"/><rect x="923" y="0" width="5.0" height="176" fill="url(#colg)" opacity="0.50" filter="url(#b1)" style="mix-blend-mode:lighten"/><rect x="923" y="0" width="20" height="176" fill="url(#colh)" opacity="0.40" style="mix-blend-mode:lighten"/><rect x="1049" y="0" width="5.0" height="176" fill="url(#colg)" opacity="0.30" filter="url(#b1)" style="mix-blend-mode:lighten"/><rect x="1049" y="0" width="24" height="176" fill="url(#colh)" opacity="0.24" style="mix-blend-mode:lighten"/><rect x="1162" y="0" width="11.2" height="176" fill="url(#colg)" opacity="1.00" filter="url(#b1)" style="mix-blend-mode:lighten"/><rect x="1162" y="0" width="75" height="176" fill="url(#colh)" opacity="0.80" style="mix-blend-mode:lighten"/></g><rect x="0" y="0" width="1271" height="176" fill="#000" filter="url(#streak)"/></g>
</defs><clipPath id="cc"><rect width="1271" height="176"/></clipPath><g clip-path="url(#cc)"><g style="isolation:isolate"><use href="#ch" y="0"/></g><ellipse cx="33.0" cy="156.5" rx="20.0" ry="5.5" fill="#f2a51c" opacity="0.66" filter="url(#b4)"/><ellipse cx="30.0" cy="142.5" rx="15.0" ry="2.5" fill="#f2a51c" opacity="0.36" filter="url(#b4)"/><ellipse cx="162.0" cy="156.5" rx="35.0" ry="6.5" fill="#f2a51c" opacity="1.0" filter="url(#b4)"/><ellipse cx="217.0" cy="156.5" rx="85.0" ry="4.0" fill="#f2a51c" opacity="1.0" filter="url(#b4)"/><ellipse cx="335.0" cy="156.5" rx="120.0" ry="2.5" fill="#f2a51c" opacity="0.54" filter="url(#b4)"/><ellipse cx="197.0" cy="138.5" rx="65.0" ry="3.0" fill="#f2a51c" opacity="0.72" filter="url(#b4)"/><ellipse cx="177.0" cy="125" rx="45.0" ry="2.5" fill="#f2a51c" opacity="0.6" filter="url(#b4)"/><ellipse cx="157.0" cy="115" rx="25.0" ry="2.0" fill="#f2a51c" opacity="0.42" filter="url(#b4)"/><ellipse cx="498.0" cy="155.5" rx="30.0" ry="6.5" fill="#f2a51c" opacity="1.0" filter="url(#b4)"/><ellipse cx="565.0" cy="156.5" rx="80.0" ry="4.0" fill="#f2a51c" opacity="0.84" filter="url(#b4)"/><ellipse cx="528.0" cy="138.5" rx="60.0" ry="3.0" fill="#f2a51c" opacity="0.6" filter="url(#b4)"/><ellipse cx="498.0" cy="126" rx="30.0" ry="2.5" fill="#f2a51c" opacity="0.42" filter="url(#b4)"/><ellipse cx="856.0" cy="156.5" rx="45.0" ry="6.5" fill="#f2a51c" opacity="1.0" filter="url(#b4)"/><ellipse cx="905.0" cy="156.5" rx="70.0" ry="4.0" fill="#f2a51c" opacity="1.0" filter="url(#b4)"/><ellipse cx="846.0" cy="131" rx="35.0" ry="3.5" fill="#f2a51c" opacity="0.78" filter="url(#b4)"/><ellipse cx="841.0" cy="142.5" rx="30.0" ry="2.5" fill="#f2a51c" opacity="0.66" filter="url(#b4)"/><ellipse cx="1069.0" cy="155.5" rx="20.0" ry="5.5" fill="#f2a51c" opacity="0.84" filter="url(#b4)"/><ellipse cx="1105.0" cy="155.5" rx="40.0" ry="2.5" fill="#f2a51c" opacity="0.54" filter="url(#b4)"/><ellipse cx="1061.5" cy="135" rx="12.5" ry="3.0" fill="#f2a51c" opacity="0.48" filter="url(#b4)"/><ellipse cx="1177.0" cy="104" rx="15.0" ry="2.5" fill="#f2a51c" opacity="0.54" filter="url(#b4)"/><ellipse cx="1192.0" cy="112" rx="30.0" ry="2.5" fill="#f2a51c" opacity="0.6" filter="url(#b4)"/><ellipse cx="1204.5" cy="120" rx="42.5" ry="3.0" fill="#f2a51c" opacity="0.66" filter="url(#b4)"/><ellipse cx="1212.5" cy="128" rx="47.5" ry="3.0" fill="#f2a51c" opacity="0.72" filter="url(#b4)"/><ellipse cx="1207.0" cy="138.5" rx="45.0" ry="3.5" fill="#f2a51c" opacity="0.72" filter="url(#b4)"/><ellipse cx="1197.0" cy="146.5" rx="35.0" ry="3.0" fill="#f2a51c" opacity="0.6" filter="url(#b4)"/><ellipse cx="1176.0" cy="131" rx="14.0" ry="12.0" fill="#f2a51c" opacity="0.66" filter="url(#b4)"/><ellipse cx="1179.5" cy="155.5" rx="17.5" ry="3.0" fill="#f2a51c" opacity="0.48" filter="url(#b4)"/><ellipse cx="545.0" cy="156" rx="75.0" ry="3.5" fill="#f2a51c" opacity="0.84" filter="url(#b4)"/><ellipse cx="207.0" cy="148.5" rx="75.0" ry="3.0" fill="#f2a51c" opacity="0.72" filter="url(#b4)"/><ellipse cx="170.0" cy="131" rx="30.0" ry="5.0" fill="#f2a51c" opacity="0.6" filter="url(#b4)"/><ellipse cx="1089.0" cy="159.5" rx="40.0" ry="2.5" fill="#f2a51c" opacity="0.6" filter="url(#b4)"/><ellipse cx="1105.0" cy="155.5" rx="25.0" ry="2.5" fill="#f2a51c" opacity="0.48" filter="url(#b4)"/><ellipse cx="871.0" cy="148.5" rx="60.0" ry="2.5" fill="#f2a51c" opacity="0.6" filter="url(#b4)"/><rect x="0" y="169" width="1271" height="1.3" fill="#8aa2b8" opacity="0.5"/><rect x="0" y="0" width="1271" height="176" fill="url(#stri)"/></g><rect y="176" width="1271" height="8" fill="#46474e"/><rect y="176" width="1271" height="1" fill="#55565d"/><rect y="183" width="1271" height="1" fill="#66676e"/><g transform="translate(0,184)"><g clip-path="url(#cc)"><g style="isolation:isolate"><use href="#ch"/></g><ellipse cx="33.0" cy="156.5" rx="20.0" ry="5.5" fill="#f2a51c" opacity="0.66" filter="url(#b4)"/><ellipse cx="30.0" cy="142.5" rx="15.0" ry="2.5" fill="#f2a51c" opacity="0.36" filter="url(#b4)"/><ellipse cx="162.0" cy="156.5" rx="35.0" ry="6.5" fill="#f2a51c" opacity="1.0" filter="url(#b4)"/><ellipse cx="217.0" cy="156.5" rx="85.0" ry="4.0" fill="#f2a51c" opacity="1.0" filter="url(#b4)"/><ellipse cx="335.0" cy="156.5" rx="120.0" ry="2.5" fill="#f2a51c" opacity="0.54" filter="url(#b4)"/><ellipse cx="197.0" cy="138.5" rx="65.0" ry="3.0" fill="#f2a51c" opacity="0.72" filter="url(#b4)"/><ellipse cx="177.0" cy="125" rx="45.0" ry="2.5" fill="#f2a51c" opacity="0.6" filter="url(#b4)"/><ellipse cx="157.0" cy="115" rx="25.0" ry="2.0" fill="#f2a51c" opacity="0.42" filter="url(#b4)"/><ellipse cx="498.0" cy="155.5" rx="30.0" ry="6.5" fill="#f2a51c" opacity="1.0" filter="url(#b4)"/><ellipse cx="565.0" cy="156.5" rx="80.0" ry="4.0" fill="#f2a51c" opacity="0.84" filter="url(#b4)"/><ellipse cx="528.0" cy="138.5" rx="60.0" ry="3.0" fill="#f2a51c" opacity="0.6" filter="url(#b4)"/><ellipse cx="498.0" cy="126" rx="30.0" ry="2.5" fill="#f2a51c" opacity="0.42" filter="url(#b4)"/><ellipse cx="856.0" cy="156.5" rx="45.0" ry="6.5" fill="#f2a51c" opacity="1.0" filter="url(#b4)"/><ellipse cx="905.0" cy="156.5" rx="70.0" ry="4.0" fill="#f2a51c" opacity="1.0" filter="url(#b4)"/><ellipse cx="846.0" cy="131" rx="35.0" ry="3.5" fill="#f2a51c" opacity="0.78" filter="url(#b4)"/><ellipse cx="841.0" cy="142.5" rx="30.0" ry="2.5" fill="#f2a51c" opacity="0.66" filter="url(#b4)"/><ellipse cx="1069.0" cy="155.5" rx="20.0" ry="5.5" fill="#f2a51c" opacity="0.84" filter="url(#b4)"/><ellipse cx="1105.0" cy="155.5" rx="40.0" ry="2.5" fill="#f2a51c" opacity="0.54" filter="url(#b4)"/><ellipse cx="1061.5" cy="135" rx="12.5" ry="3.0" fill="#f2a51c" opacity="0.48" filter="url(#b4)"/><ellipse cx="1177.0" cy="104" rx="15.0" ry="2.5" fill="#f2a51c" opacity="0.54" filter="url(#b4)"/><ellipse cx="1192.0" cy="112" rx="30.0" ry="2.5" fill="#f2a51c" opacity="0.6" filter="url(#b4)"/><ellipse cx="1204.5" cy="120" rx="42.5" ry="3.0" fill="#f2a51c" opacity="0.66" filter="url(#b4)"/><ellipse cx="1212.5" cy="128" rx="47.5" ry="3.0" fill="#f2a51c" opacity="0.72" filter="url(#b4)"/><ellipse cx="1207.0" cy="138.5" rx="45.0" ry="3.5" fill="#f2a51c" opacity="0.72" filter="url(#b4)"/><ellipse cx="1197.0" cy="146.5" rx="35.0" ry="3.0" fill="#f2a51c" opacity="0.6" filter="url(#b4)"/><ellipse cx="1176.0" cy="131" rx="14.0" ry="12.0" fill="#f2a51c" opacity="0.66" filter="url(#b4)"/><ellipse cx="1179.5" cy="155.5" rx="17.5" ry="3.0" fill="#f2a51c" opacity="0.48" filter="url(#b4)"/><ellipse cx="545.0" cy="156" rx="75.0" ry="3.5" fill="#f2a51c" opacity="0.84" filter="url(#b4)"/><ellipse cx="207.0" cy="148.5" rx="75.0" ry="3.0" fill="#f2a51c" opacity="0.72" filter="url(#b4)"/><ellipse cx="170.0" cy="131" rx="30.0" ry="5.0" fill="#f2a51c" opacity="0.6" filter="url(#b4)"/><ellipse cx="1089.0" cy="159.5" rx="40.0" ry="2.5" fill="#f2a51c" opacity="0.6" filter="url(#b4)"/><ellipse cx="1105.0" cy="155.5" rx="25.0" ry="2.5" fill="#f2a51c" opacity="0.48" filter="url(#b4)"/><ellipse cx="871.0" cy="148.5" rx="60.0" ry="2.5" fill="#f2a51c" opacity="0.6" filter="url(#b4)"/><ellipse cx="60.0" cy="156" rx="60.0" ry="3.5" fill="#f2a51c" opacity="0.72" filter="url(#b4)"/><ellipse cx="37.5" cy="155" rx="22.5" ry="6.0" fill="#f2a51c" opacity="0.8999999999999999" filter="url(#b4)"/><ellipse cx="157.0" cy="130" rx="25.0" ry="7.0" fill="#f2a51c" opacity="0.54" filter="url(#b4)"/><ellipse cx="215.0" cy="156" rx="60.0" ry="3.0" fill="#f2a51c" opacity="0.6" filter="url(#b4)"/><rect x="0" y="169" width="1271" height="1.3" fill="#8aa2b8" opacity="0.5"/><rect x="0" y="0" width="1271" height="176" fill="url(#stri)"/></g></g></svg>
<svg style="position:absolute;left:85px;top:195px;" width="1271" height="360" viewBox="0 0 1271 360"><polygon points="459.6,50.0 471.6,48.2 480.0,56.0 495.6,65.1 521.8,70.4 547.9,87.3 563.6,100.4 581.9,109.6 605.4,117.4 623.7,126.0 636.7,137.0 643.2,144.8 644.0,161.8 636.7,163.6 615.8,168.9 574.0,168.3 547.9,169.6 521.8,171.0 472.1,170.4 457.0,169.6 457.7,155.3 463.0,131.8 464.3,105.6 463.0,76.9" fill="#c0cde0" fill-opacity="0.52" stroke="#e2e3e6" stroke-width="2.2" stroke-linejoin="round"/><polygon points="459.6,234.0 471.6,232.2 480.0,240.0 495.6,249.1 521.8,254.4 547.9,271.3 563.6,284.4 581.9,293.6 605.4,301.4 623.7,310.0 636.7,321.0 643.2,328.8 644.0,345.8 636.7,347.6 615.8,352.9 574.0,352.3 547.9,353.6 521.8,355.0 472.1,354.4 457.0,353.6 457.7,339.3 463.0,315.8 464.3,289.6 463.0,260.9" fill="#c6c9d0" fill-opacity="0.46" stroke="#e2e3e6" stroke-width="2.2" stroke-linejoin="round"/></svg>
<div style="left:85px;top:555px;width:1271px;height:21px;background:#4d4e54;"></div>
<div style="left:84px;top:555px;width:20px;height:21px;background:linear-gradient(#eeeef0,#c9cacd);"></div>
<svg style="position:absolute;left:91px;top:560px;" width="7" height="11" viewBox="0 0 7 11"><path d="M7 0 V11 L0 5.5Z"/></svg>
<div style="left:568px;top:560px;width:104px;height:12px;background:#c9cbd2;"></div>
<div style="left:570px;top:561px;width:1.3px;height:10px;background:#f4f4f6;"></div>
<div style="left:669px;top:561px;width:1.3px;height:10px;background:#f4f4f6;"></div>
<div style="left:1297px;top:555px;width:60px;height:21px;background:linear-gradient(#eeeef0,#c9cacd);"></div>
<div style="left:1316.5px;top:556px;width:1px;height:19px;background:#a8a9ad;"></div>
<div style="left:1336.5px;top:556px;width:1px;height:19px;background:#a8a9ad;"></div>
<div style="left:1356px;top:195px;width:21px;height:381px;background:#4d4e54;border-bottom-right-radius:4px;"></div>
<div style="left:1356px;top:195px;width:21px;height:19px;background:linear-gradient(#eeeef0,#c9cacd);"></div>
<svg style="position:absolute;left:1361px;top:200px;" width="11" height="7" viewBox="0 0 11 7"><path d="M0 7 H11 L5.5 0Z"/></svg>
<div style="left:1361px;top:217px;width:12px;height:275px;background:#c9cbd2;border-top:1.5px solid #f3f3f5;border-bottom:1.5px solid #f3f3f5;"></div>
<div style="left:1356px;top:496px;width:21px;height:80px;background:linear-gradient(#eeeef0,#c9cacd);border-bottom-right-radius:4px;"></div>
<div style="left:1357px;top:515.5px;width:19px;height:1px;background:#a8a9ad;"></div>
<div style="left:1357px;top:535.5px;width:19px;height:1px;background:#a8a9ad;"></div>
<div style="left:1357px;top:555.6px;width:19px;height:1px;background:#a8a9ad;"></div>
<svg style="position:absolute;left:1361px;top:541px;" width="11" height="7" viewBox="0 0 11 7"><path d="M0 0 H11 L5.5 7Z"/></svg>
<svg style="position:absolute;left:1360px;top:499px;" width="13" height="13" viewBox="0 0 13 13"><circle cx="5.5" cy="5.5" r="4.3" fill="none" stroke="#000" stroke-width="1.6"/><path d="M8.5 8.5 L12 12" stroke="#000" stroke-width="2"/><path d="M3.3 5.5 H7.7 M5.5 3.3 V7.7" stroke="#000" stroke-width="1.2"/></svg>
<svg style="position:absolute;left:1360px;top:519px;" width="13" height="13" viewBox="0 0 13 13"><circle cx="5.5" cy="5.5" r="4.3" fill="none" stroke="#000" stroke-width="1.6"/><path d="M8.5 8.5 L12 12" stroke="#000" stroke-width="2"/><path d="M3.3 5.5 H7.7" stroke="#000" stroke-width="1.2"/></svg>
<svg style="position:absolute;left:1360px;top:559px;" width="13" height="13" viewBox="0 0 13 13"><path d="M2 11 L7.5 5.5" stroke="#000" stroke-width="2.6" stroke-linecap="round"/><circle cx="9" cy="4" r="3.3" fill="#000"/><path d="M9 0 L13 4 L10.5 5.5 L7.5 2.5Z" fill="#dadadd"/></svg>
<svg style="position:absolute;left:1300px;top:559px;" width="13" height="13" viewBox="0 0 13 13"><circle cx="5.5" cy="5.5" r="4.3" fill="none" stroke="#000" stroke-width="1.6"/><path d="M8.5 8.5 L12 12" stroke="#000" stroke-width="2"/><path d="M3.3 5.5 H7.7 M5.5 3.3 V7.7" stroke="#000" stroke-width="1.2"/></svg>
<svg style="position:absolute;left:1320px;top:559px;" width="13" height="13" viewBox="0 0 13 13"><circle cx="5.5" cy="5.5" r="4.3" fill="none" stroke="#000" stroke-width="1.6"/><path d="M8.5 8.5 L12 12" stroke="#000" stroke-width="2"/><path d="M3.3 5.5 H7.7" stroke="#000" stroke-width="1.2"/></svg>
<svg style="position:absolute;left:1343px;top:560px;" width="7" height="11" viewBox="0 0 7 11"><path d="M0 0 V11 L7 5.5Z"/></svg>
<div style="left:4px;top:576px;width:1385px;height:84px;background:#22232a;"></div>
<div class="t" style="left:101.5px;top:582.5px;font-size:11.4px;line-height:15px;color:#e0e0e3;">From:</div>
<div class="t" style="left:193px;top:582.5px;font-size:11.4px;line-height:15px;color:#e0e0e3;">To:</div>
<div class="t" style="left:285px;top:582.5px;font-size:11.4px;line-height:15px;color:#e0e0e3;">Duration:</div>
<div class="t" style="left:25px;top:602.5px;font-size:11.4px;line-height:15px;color:#e0e0e3;">Selection:</div>
<div class="t" style="left:25px;top:626.5px;font-size:11.4px;line-height:15px;color:#e0e0e3;">View:</div>
<div style="left:100px;top:600.5px;width:80px;height:19px;background:#d3d4d9;"></div>
<div class="t" style="left:105px;top:602.5px;font-size:11.5px;line-height:15px;color:#222;">00:00:08:066</div>
<div style="left:192px;top:600.5px;width:80px;height:19px;background:#d3d4d9;"></div>
<div class="t" style="left:197px;top:602.5px;font-size:11.5px;line-height:15px;color:#222;">00:00:08:312</div>
<div style="left:284px;top:600.5px;width:80px;height:19px;background:#d3d4d9;"></div>
<div class="t" style="left:289px;top:602.5px;font-size:11.5px;line-height:15px;color:#222;">00:00:00:246</div>
<div style="left:372px;top:599px;width:47px;height:22px;background:linear-gradient(#eeeef0,#c5c6ca);border-radius:4px;"></div>
<div style="left:395.5px;top:600px;width:1px;height:20px;background:#a9aaae;"></div>
<svg style="position:absolute;left:377px;top:603px;" width="13" height="13" viewBox="0 0 13 13"><path d="M3.5 4 H7 A3.8 3.8 0 0 1 7 11.5 H6" fill="none" stroke="#111" stroke-width="2"/><path d="M0 4 L4.5 0 V8Z" fill="#111"/></svg>
<svg style="position:absolute;left:401px;top:603px;" width="13" height="13" viewBox="0 0 13 13"><path d="M9.5 4 H6 A3.8 3.8 0 0 0 6 11.5 H7" fill="none" stroke="#909196" stroke-width="2"/><path d="M13 4 L8.5 0 V8Z" fill="#909196"/></svg>
<div style="left:100px;top:624.5px;width:80px;height:19px;background:#d3d4d9;"></div>
<div class="t" style="left:105px;top:626.5px;font-size:11.5px;line-height:15px;color:#222;">00:00:07:461</div>
<div style="left:192px;top:624.5px;width:80px;height:19px;background:#d3d4d9;"></div>
<div class="t" style="left:197px;top:626.5px;font-size:11.5px;line-height:15px;color:#222;">00:00:09:140</div>
<div style="left:284px;top:624.5px;width:80px;height:19px;background:#d3d4d9;"></div>
<div class="t" style="left:289px;top:626.5px;font-size:11.5px;line-height:15px;color:#222;">00:00:01:679</div>
<div style="left:372px;top:623px;width:47px;height:22px;background:linear-gradient(#eeeef0,#c5c6ca);border-radius:4px;"></div>
<div style="left:395.5px;top:624px;width:1px;height:20px;background:#a9aaae;"></div>
<svg style="position:absolute;left:377px;top:627px;" width="13" height="13" viewBox="0 0 13 13"><path d="M3.5 4 H7 A3.8 3.8 0 0 1 7 11.5 H6" fill="none" stroke="#111" stroke-width="2"/><path d="M0 4 L4.5 0 V8Z" fill="#111"/></svg>
<svg style="position:absolute;left:401px;top:627px;" width="13" height="13" viewBox="0 0 13 13"><path d="M9.5 4 H6 A3.8 3.8 0 0 0 6 11.5 H7" fill="none" stroke="#909196" stroke-width="2"/><path d="M13 4 L8.5 0 V8Z" fill="#909196"/></svg>
<div class="t" style="left:433px;top:602.5px;font-size:11.4px;line-height:15px;color:#e0e0e3;">Cursor position:</div>
<div class="t" style="left:433px;top:626.5px;font-size:11.4px;line-height:15px;color:#e0e0e3;">48000 Hz, 2 channels, 24 bit PCM</div>
<div style="left:540px;top:600.5px;width:80px;height:19px;background:#d3d4d9;"></div>
<div class="t" style="left:545px;top:602.5px;font-size:11.5px;line-height:15px;color:#222;">00:00:08:066</div>
<div class="t" style="left:637px;top:582.5px;font-size:11.4px;line-height:15px;color:#e0e0e3;">From (Hz):</div>
<div class="t" style="left:721px;top:582.5px;font-size:11.4px;line-height:15px;color:#e0e0e3;">To (Hz):</div>
<div class="t" style="left:805px;top:582.5px;font-size:11.4px;line-height:15px;color:#e0e0e3;">Range (Hz):</div>
<div style="left:636px;top:600.5px;width:72px;height:19px;background:#d3d4d9;"></div>
<div class="t" style="left:641px;top:602.5px;font-size:11.5px;line-height:15px;color:#222;">74.5758</div>
<div style="left:636px;top:624.5px;width:72px;height:19px;background:#d3d4d9;"></div>
<div class="t" style="left:641px;top:626.5px;font-size:11.5px;line-height:15px;color:#222;">0</div>
<div style="left:720px;top:600.5px;width:72px;height:19px;background:#d3d4d9;"></div>
<div class="t" style="left:725px;top:602.5px;font-size:11.5px;line-height:15px;color:#222;">8645.98</div>
<div style="left:720px;top:624.5px;width:72px;height:19px;background:#d3d4d9;"></div>
<div class="t" style="left:725px;top:626.5px;font-size:11.5px;line-height:15px;color:#222;">24000</div>
<div style="left:804px;top:600.5px;width:72px;height:19px;background:#d3d4d9;"></div>
<div class="t" style="left:809px;top:602.5px;font-size:11.5px;line-height:15px;color:#222;">8571.4</div>
<div style="left:804px;top:624.5px;width:72px;height:19px;background:#d3d4d9;"></div>
<div class="t" style="left:809px;top:626.5px;font-size:11.5px;line-height:15px;color:#222;">24000</div>
<div style="left:899px;top:600px;width:457px;height:12px;background:linear-gradient(90deg,#050608 0%,#0e1a2b 15%,#1a3556 30%,#2b5f96 40%,#5b7a8a 48%,#b08a40 60%,#e89a10 75%,#ffe000 90%,#fffbe0 97%,#fff 100%);"></div>
<svg style="position:absolute;left:899px;top:612px;" width="460" height="6" viewBox="0 0 460 6"><rect x="899.0" y="0" width="1" height="5" fill="#9a9ca2"/><rect x="990.2" y="0" width="1" height="5" fill="#9a9ca2"/><rect x="1081.4" y="0" width="1" height="5" fill="#9a9ca2"/><rect x="1172.6" y="0" width="1" height="5" fill="#9a9ca2"/><rect x="1263.8" y="0" width="1" height="5" fill="#9a9ca2"/><rect x="1355.0" y="0" width="1" height="5" fill="#9a9ca2"/></svg>
<div class="t" style="left:879.5px;width:40px;text-align:center;top:617.5px;font-size:10px;line-height:13px;color:#c5c6ca;">-100</div>
<div class="t" style="left:970.7px;width:40px;text-align:center;top:617.5px;font-size:10px;line-height:13px;color:#c5c6ca;">-80</div>
<div class="t" style="left:1061.9px;width:40px;text-align:center;top:617.5px;font-size:10px;line-height:13px;color:#c5c6ca;">-60</div>
<div class="t" style="left:1153.1px;width:40px;text-align:center;top:617.5px;font-size:10px;line-height:13px;color:#c5c6ca;">-40</div>
<div class="t" style="left:1244.3px;width:40px;text-align:center;top:617.5px;font-size:10px;line-height:13px;color:#c5c6ca;">-20</div>
<div class="t" style="left:1335.5px;width:40px;text-align:center;top:617.5px;font-size:10px;line-height:13px;color:#c5c6ca;">0</div>
<div class="t" style="left:1068.0px;width:120px;text-align:center;top:633.5px;font-size:10px;line-height:13px;color:#c5c6ca;">Magnitude (dB)</div>
<div style="left:1389px;top:97px;width:4px;height:563px;background:#4b4e57;"></div>
<div style="left:1527px;top:97px;width:4px;height:563px;background:#4b4e57;"></div>
<div style="left:1393px;top:97px;width:134px;height:445px;background:#17181d;"></div>
<div style="left:1393px;top:97px;width:134px;height:25px;background:#30323b;"></div>
<div class="t" style="left:1399px;top:102.5px;font-size:11.5px;line-height:15px;color:#e6e6e8;">Level Meter</div>
<svg style="position:absolute;left:1514px;top:105px;" width="10" height="10" viewBox="0 0 10 10"><path d="M1.5 1.5 L8.5 8.5 M8.5 1.5 L1.5 8.5" stroke="#fff" stroke-width="2.8" stroke-linecap="round"/></svg>
<div class="t" style="right:105px;top:137.0px;font-size:9.7px;line-height:13px;color:#d0d1d4;">0</div>
<div class="t" style="right:105px;top:172.5px;font-size:9.7px;line-height:13px;color:#d0d1d4;">-4</div>
<div class="t" style="right:105px;top:208.5px;font-size:9.7px;line-height:13px;color:#d0d1d4;">-8</div>
<div class="t" style="right:105px;top:244.0px;font-size:9.7px;line-height:13px;color:#d0d1d4;">-12</div>
<div class="t" style="right:105px;top:279.5px;font-size:9.7px;line-height:13px;color:#d0d1d4;">-16</div>
<div class="t" style="right:105px;top:316.0px;font-size:9.7px;line-height:13px;color:#d0d1d4;">-20</div>
<div class="t" style="right:105px;top:338.5px;font-size:9.7px;line-height:13px;color:#d0d1d4;">-30</div>
<div class="t" style="right:105px;top:361.5px;font-size:9.7px;line-height:13px;color:#d0d1d4;">-40</div>
<div class="t" style="right:105px;top:384.0px;font-size:9.7px;line-height:13px;color:#d0d1d4;">-50</div>
<div class="t" style="right:105px;top:406.5px;font-size:9.7px;line-height:13px;color:#d0d1d4;">-60</div>
<div class="t" style="right:105px;top:429.0px;font-size:9.7px;line-height:13px;color:#d0d1d4;">-70</div>
<div class="t" style="right:105px;top:451.5px;font-size:9.7px;line-height:13px;color:#d0d1d4;">-80</div>
<div class="t" style="right:105px;top:474.0px;font-size:9.7px;line-height:13px;color:#d0d1d4;">-90</div>
<div class="t" style="right:105px;top:496.5px;font-size:9.7px;line-height:13px;color:#d0d1d4;">-100</div>
<svg style="position:absolute;left:1393px;top:122px;" width="134" height="423" viewBox="0 0 134 423"><rect x="42" y="12" width="34" height="4" fill="#46474c"/><rect x="42" y="20" width="34" height="362" fill="#444449"/><rect x="42" y="381" width="34" height="3" fill="#fafafa"/><rect x="88" y="12" width="34" height="4" fill="#46474c"/><rect x="88" y="20" width="34" height="362" fill="#444449"/><rect x="88" y="381" width="34" height="3" fill="#fafafa"/><rect x="36" y="21.0" width="6" height="1" fill="#77797f"/><rect x="36" y="56.5" width="6" height="1" fill="#77797f"/><rect x="36" y="92.5" width="6" height="1" fill="#77797f"/><rect x="36" y="128.0" width="6" height="1" fill="#77797f"/><rect x="36" y="163.5" width="6" height="1" fill="#77797f"/><rect x="36" y="200.0" width="6" height="1" fill="#77797f"/><rect x="36" y="222.5" width="6" height="1" fill="#77797f"/><rect x="36" y="245.5" width="6" height="1" fill="#77797f"/><rect x="36" y="268.0" width="6" height="1" fill="#77797f"/><rect x="36" y="290.5" width="6" height="1" fill="#77797f"/><rect x="36" y="313.0" width="6" height="1" fill="#77797f"/><rect x="36" y="335.5" width="6" height="1" fill="#77797f"/><rect x="36" y="358.0" width="6" height="1" fill="#77797f"/><rect x="36" y="380.5" width="6" height="1" fill="#77797f"/></svg>
<div class="t" style="left:1437.0px;width:30px;text-align:center;top:508.5px;font-size:11px;line-height:14px;color:#e0e0e3;letter-spacing:-0.6px;">-oo</div>
<div class="t" style="left:1483.0px;width:30px;text-align:center;top:508.5px;font-size:11px;line-height:14px;color:#e0e0e3;letter-spacing:-0.6px;">-oo</div>
<div class="t" style="left:1431px;top:524.3px;font-size:11px;line-height:14px;color:#f0f0f2;font-weight:bold;">True peak: -10.65</div>
<svg style="position:absolute;left:1403px;top:521px;" width="15" height="15" viewBox="0 0 15 15"><path d="M2.5 12.5 L8 7" stroke="#a4a6ab" stroke-width="2.8" stroke-linecap="round"/><circle cx="10" cy="5" r="3.8" fill="#a4a6ab"/><path d="M10.5 0.5 L14.5 4.5 L12 6.5 L8.5 3Z" fill="#17181d"/></svg>
<div style="left:1393px;top:542px;width:134px;height:4px;background:#4b4e57;"></div>
<div style="left:1393px;top:546px;width:134px;height:114px;background:#17181d;"></div>
<div style="left:1393px;top:546px;width:134px;height:24px;background:#30323b;"></div>
<div class="t" style="left:1399.5px;top:550.5px;font-size:11.6px;line-height:15px;color:#e6e6e8;">Correlation Meter</div>
<svg style="position:absolute;left:1514px;top:553px;" width="10" height="10" viewBox="0 0 10 10"><path d="M1.5 1.5 L9.5 9.5 M9.5 1.5 L1.5 9.5" stroke="#fff" stroke-width="2.6"/></svg>
<svg style="position:absolute;left:1393px;top:571px;" width="134" height="89" viewBox="0 0 134 89"><path d="M15 12 L119 50 M15 50 L119 12 M15 31 H119 M67 12 V50" stroke="#3f4045" stroke-width="1"/><rect x="15" y="59" width="52" height="8" fill="#3e3f44"/><rect x="67" y="59" width="52" height="8" fill="#3fcc45"/><rect x="15" y="67" width="1" height="4" fill="#77797f"/><rect x="67" y="67" width="1" height="4" fill="#77797f"/><rect x="118" y="67" width="1" height="4" fill="#77797f"/></svg>
<div class="t" style="left:1397.0px;width:20px;text-align:center;top:643.5px;font-size:10px;line-height:13px;color:#c5c6ca;">-1</div>
<div class="t" style="left:1450.0px;width:20px;text-align:center;top:643.5px;font-size:10px;line-height:13px;color:#c5c6ca;">0</div>
<div class="t" style="left:1501.0px;width:20px;text-align:center;top:643.5px;font-size:10px;line-height:13px;color:#c5c6ca;">1</div>
<div style="left:0px;top:660px;width:1531px;height:4px;background:#535660;"></div>
<div style="left:0px;top:664px;width:1531px;height:233px;background:#2c2e35;"></div>
<div style="left:4px;top:664px;width:454px;height:229px;background:#30323b;"></div>
<svg style="position:absolute;left:4px;top:665px;" width="166" height="24" viewBox="0 0 166 24"><path d="M0 23 L12 0.5 H153 L165 23Z" fill="#f5b42b" stroke="#25262b" stroke-width="0.8"/></svg>
<div class="t" style="left:28.5px;top:668.5px;font-size:12.5px;line-height:16px;color:#1d1a12;">Media File Browser</div>
<svg style="position:absolute;left:140px;top:670px;" width="11" height="11" viewBox="0 0 11 11"><path d="M1.5 1.5 L9.5 9.5 M9.5 1.5 L1.5 9.5" stroke="#111" stroke-width="2.6"/></svg>
<svg style="position:absolute;left:168px;top:665px;" width="123" height="24" viewBox="0 0 123 24"><path d="M0 23 L12 0.5 H110 L122 23Z" fill="#5a5d68" stroke="#25262b" stroke-width="0.8"/></svg>
<div class="t" style="left:193px;top:668.5px;font-size:12.5px;line-height:16px;color:#e8e8ea;">Region List</div>
<svg style="position:absolute;left:261px;top:670px;" width="11" height="11" viewBox="0 0 11 11"><path d="M1.5 1.5 L9.5 9.5 M9.5 1.5 L1.5 9.5" stroke="#eee" stroke-width="2.6"/></svg>
<svg style="position:absolute;left:290px;top:665px;" width="110" height="24" viewBox="0 0 110 24"><path d="M0 23 L12 0.5 H97 L109 23Z" fill="#5a5d68" stroke="#25262b" stroke-width="0.8"/></svg>
<div class="t" style="left:314px;top:668.5px;font-size:12.5px;line-height:16px;color:#e8e8ea;">Label List</div>
<svg style="position:absolute;left:373px;top:670px;" width="11" height="11" viewBox="0 0 11 11"><path d="M1.5 1.5 L9.5 9.5 M9.5 1.5 L1.5 9.5" stroke="#eee" stroke-width="2.6"/></svg>
<div style="left:4px;top:687px;width:454px;height:1.3px;background:#dcaa48;"></div>
<div style="left:12px;top:696px;width:374px;height:23px;background:linear-gradient(#e9e9ec,#c3c4c9);border-radius:2px;"></div>
<div class="t" style="left:18px;top:699.5px;font-size:12.3px;line-height:16px;color:#111;">C:\Users\Stian\Music</div>
<svg style="position:absolute;left:371px;top:700px;" width="9" height="15" viewBox="0 0 9 15"><path d="M0.5 6 L4.5 1 L8.5 6Z M0.5 9 L4.5 14 L8.5 9Z" fill="#6b6c70"/></svg>
<div style="left:394px;top:696px;width:23px;height:23.5px;background:linear-gradient(#eeeef0,#c5c6ca);border-radius:4px;"></div>
<svg style="position:absolute;left:399px;top:701px;" width="13" height="14" viewBox="0 0 13 14"><path d="M6.5 13 V2 M1.5 7 L6.5 2 L11.5 7" stroke="#000" stroke-width="2.2" fill="none"/></svg>
<div style="left:426px;top:696px;width:23.5px;height:23.5px;background:linear-gradient(#eeeef0,#c5c6ca);border-radius:4px;"></div>
<svg style="position:absolute;left:431px;top:702px;" width="14" height="11" viewBox="0 0 14 11"><path d="M0 1 H5 L6.5 2.5 H13 V11 H0Z" fill="#000"/></svg>
<div style="left:12px;top:728px;width:438px;height:157px;background:#17181d;"></div>
<svg style="position:absolute;left:17px;top:731.5px;" width="13" height="14" viewBox="0 0 13 14"><path d="M1 1 H8 L12 5 V13 H1Z" fill="none" stroke="#e8e8ea" stroke-width="1.2"/><path d="M3 8 H5 L7 6 V11 L5 9.5 H3Z M8.3 7 V10 M9.8 6 V11" fill="#e8e8ea" stroke="#e8e8ea" stroke-width="0.8"/></svg>
<div class="t" style="left:36px;top:730.5px;font-size:12.5px;line-height:16px;color:#eaeaec;">Ascending the Mountain.wav</div>
<svg style="position:absolute;left:431px;top:732.0px;" width="12" height="13" viewBox="0 0 12 13"><path d="M0 0 V13 L12 6.5Z" fill="#f4f4f6"/></svg>
<svg style="position:absolute;left:17px;top:753.5px;" width="13" height="14" viewBox="0 0 13 14"><path d="M1 1 H8 L12 5 V13 H1Z" fill="none" stroke="#e8e8ea" stroke-width="1.2"/><path d="M3 8 H5 L7 6 V11 L5 9.5 H3Z M8.3 7 V10 M9.8 6 V11" fill="#e8e8ea" stroke="#e8e8ea" stroke-width="0.8"/></svg>
<div class="t" style="left:36px;top:752.5px;font-size:12.5px;line-height:16px;color:#eaeaec;">Clair De Lune.wav</div>
<svg style="position:absolute;left:431px;top:754.0px;" width="12" height="13" viewBox="0 0 12 13"><path d="M0 0 V13 L12 6.5Z" fill="#f4f4f6"/></svg>
<svg style="position:absolute;left:17px;top:775.5px;" width="13" height="14" viewBox="0 0 13 14"><path d="M1 1 H8 L12 5 V13 H1Z" fill="none" stroke="#e8e8ea" stroke-width="1.2"/><path d="M3 8 H5 L7 6 V11 L5 9.5 H3Z M8.3 7 V10 M9.8 6 V11" fill="#e8e8ea" stroke="#e8e8ea" stroke-width="0.8"/></svg>
<div class="t" style="left:36px;top:774.5px;font-size:12.5px;line-height:16px;color:#eaeaec;">Nimrod.wav</div>
<svg style="position:absolute;left:431px;top:776.0px;" width="12" height="13" viewBox="0 0 12 13"><path d="M0 0 V13 L12 6.5Z" fill="#f4f4f6"/></svg>
<svg style="position:absolute;left:17px;top:797.5px;" width="13" height="14" viewBox="0 0 13 14"><path d="M1 1 H8 L12 5 V13 H1Z" fill="none" stroke="#e8e8ea" stroke-width="1.2"/><path d="M3 8 H5 L7 6 V11 L5 9.5 H3Z M8.3 7 V10 M9.8 6 V11" fill="#e8e8ea" stroke="#e8e8ea" stroke-width="0.8"/></svg>
<div class="t" style="left:36px;top:796.5px;font-size:12.5px;line-height:16px;color:#eaeaec;">Supertramp - Breakfast in America.wav</div>
<svg style="position:absolute;left:431px;top:798.0px;" width="12" height="13" viewBox="0 0 12 13"><path d="M0 0 V13 L12 6.5Z" fill="#f4f4f6"/></svg>
<svg style="position:absolute;left:17px;top:819.5px;" width="13" height="14" viewBox="0 0 13 14"><path d="M1 1 H8 L12 5 V13 H1Z" fill="none" stroke="#e8e8ea" stroke-width="1.2"/><path d="M3 8 H5 L7 6 V11 L5 9.5 H3Z M8.3 7 V10 M9.8 6 V11" fill="#e8e8ea" stroke="#e8e8ea" stroke-width="0.8"/></svg>
<div class="t" style="left:36px;top:818.5px;font-size:12.5px;line-height:16px;color:#eaeaec;">Supertramp - The Logical Song.wav</div>
<svg style="position:absolute;left:431px;top:820.0px;" width="12" height="13" viewBox="0 0 12 13"><path d="M0 0 V13 L12 6.5Z" fill="#f4f4f6"/></svg>
<div style="left:458px;top:664px;width:4px;height:233px;background:#4b4e57;"></div>
<div style="left:462px;top:664px;width:437px;height:229px;background:#474a54;"></div>
<div style="left:462px;top:664px;width:437px;height:24px;background:#30323b;"></div>
<div class="t" style="left:468px;top:668.5px;font-size:11.5px;line-height:15px;color:#e8e8ea;">Processing Chain</div>
<svg style="position:absolute;left:885px;top:670px;" width="11" height="11" viewBox="0 0 11 11"><path d="M1.5 1.5 L9.5 9.5 M9.5 1.5 L1.5 9.5" stroke="#fff" stroke-width="2.6"/></svg>
<div style="left:466px;top:692px;width:63px;height:27.5px;background:linear-gradient(#f0f0f2,#c8c9cd);border-radius:5px;box-shadow:0 1px 1px rgba(0,0,0,0.35);"></div>
<div style="left:466px;top:692px;width:32px;height:27.5px;background:linear-gradient(#f6bf3a,#e8a920);border-radius:5px 0 0 5px;"></div>
<svg style="position:absolute;left:474px;top:698px;" width="15" height="16" viewBox="0 0 15 16"><path d="M4 4.5 A5.5 5.5 0 1 0 11 4.5" stroke="#111" stroke-width="2" fill="none"/><path d="M7.5 1 V8" stroke="#111" stroke-width="2"/></svg>
<svg style="position:absolute;left:506px;top:698px;" width="14" height="16" viewBox="0 0 14 16"><rect x="1.5" y="3" width="11" height="12" fill="none" stroke="#111" stroke-width="1.5"/><rect x="4.5" y="1" width="5" height="4" fill="#111"/></svg>
<div style="left:538px;top:692px;width:64px;height:27.5px;background:linear-gradient(#f0f0f2,#c8c9cd);border-radius:5px;box-shadow:0 1px 1px rgba(0,0,0,0.35);"></div>
<div style="left:569.5px;top:693px;width:1px;height:25.5px;background:#b4b5b9;"></div>
<svg style="position:absolute;left:544px;top:700px;" width="17" height="13" viewBox="0 0 17 13"><path d="M1 2 H6 L8 4 H14 V6 H4 L1 12Z M4 7 H17 L14 12 H1Z" fill="#000"/></svg>
<svg style="position:absolute;left:579px;top:698px;" width="14" height="15" viewBox="0 0 14 15"><path d="M1.5 1.5 H10.5 L12.5 3.5 V13.5 H1.5Z" fill="none" stroke="#000" stroke-width="1.6"/><rect x="4" y="1.5" width="6" height="4" fill="#000"/><rect x="3.5" y="8" width="7" height="5" fill="none" stroke="#000" stroke-width="1.3"/></svg>
<div style="left:610px;top:692px;width:80px;height:27.5px;background:linear-gradient(#f0f0f2,#c8c9cd);border-radius:5px;box-shadow:0 1px 1px rgba(0,0,0,0.35);"></div>
<svg style="position:absolute;left:616px;top:700px;" width="16" height="13" viewBox="0 0 16 13"><path d="M1 1 H12 V6 A5 5 0 0 1 7 11 H6 A5 5 0 0 1 1 6Z M12 3 H14 V6 H12" fill="#111"/><rect x="0" y="11.5" width="16" height="1.5" fill="#111"/></svg>
<div class="t" style="left:638px;top:697.5px;font-size:12.3px;line-height:16px;color:#111;">Apply</div>
<svg style="position:absolute;left:676px;top:703px;" width="9" height="6" viewBox="0 0 9 6"><path d="M0 0 H9 L4.5 5.5Z" fill="#a5121b"/></svg>
<div class="t" style="left:704px;top:690.5px;font-size:13.1px;line-height:17px;color:#8c8e95;font-weight:bold;">SRC off</div>
<div class="t" style="left:704px;top:705.5px;font-size:11px;line-height:14px;color:#e8e8ea;">48000 Hz</div>
<div class="t" style="left:836.5px;width:60px;text-align:center;top:692.0px;font-size:11px;line-height:14px;color:#e8e8ea;">Output</div>
<div class="t" style="left:831.5px;width:70px;text-align:center;top:705.5px;font-size:11px;line-height:14px;color:#e8e8ea;">level (dB)</div>
<div style="left:462px;top:725px;width:371px;height:167px;background:#17181d;"></div>
<div style="left:465px;top:728px;width:367px;height:26.5px;background:#474a54;border-top:1px solid #7f828a;"></div>
<svg style="position:absolute;left:469px;top:735px;" width="8" height="13" viewBox="0 0 8 13"><rect y="0" width="7" height="2.6" fill="#c8c9cd"/><rect y="5" width="7" height="2.6" fill="#c8c9cd"/><rect y="10" width="7" height="2.6" fill="#c8c9cd"/></svg>
<svg style="position:absolute;left:484px;top:731.5px;" width="17" height="18" viewBox="0 0 17 18"><path d="M4.5 5.5 A6 6 0 1 0 12.5 5.5" stroke="#e9b43a" stroke-width="2.6" fill="none"/><path d="M8.5 1.5 V9.5" stroke="#e9b43a" stroke-width="2.6" stroke-linecap="round"/></svg>
<svg style="position:absolute;left:505px;top:734px;" width="18" height="14" viewBox="0 0 18 14"><path d="M2.5 11 V8 A6.5 6.5 0 0 1 15.5 8 V11" stroke="#c8c9cd" stroke-width="2" fill="none"/><rect x="0.5" y="8" width="4" height="6" fill="#c8c9cd"/><rect x="13.5" y="8" width="4" height="6" fill="#c8c9cd"/></svg>
<div class="t" style="left:530.5px;top:733.0px;font-size:12.4px;line-height:16px;color:#eeeef0;">Dynamics</div>
<svg style="position:absolute;left:786px;top:736px;" width="12" height="12" viewBox="0 0 12 12"><path d="M1.5 1.5 L10.5 10.5 M10.5 1.5 L1.5 10.5" stroke="#e23a3a" stroke-width="3"/></svg>
<svg style="position:absolute;left:806px;top:734px;" width="14" height="14" viewBox="0 0 14 14"><path d="M7 0.5 V13.5 M0.5 7 H13.5" stroke="#d8d9dc" stroke-width="3"/></svg>
<div style="left:465px;top:756px;width:367px;height:26.5px;background:#474a54;border-top:1px solid #7f828a;"></div>
<svg style="position:absolute;left:469px;top:763px;" width="8" height="13" viewBox="0 0 8 13"><rect y="0" width="7" height="2.6" fill="#c8c9cd"/><rect y="5" width="7" height="2.6" fill="#c8c9cd"/><rect y="10" width="7" height="2.6" fill="#c8c9cd"/></svg>
<svg style="position:absolute;left:484px;top:759.5px;" width="17" height="18" viewBox="0 0 17 18"><path d="M4.5 5.5 A6 6 0 1 0 12.5 5.5" stroke="#e9b43a" stroke-width="2.6" fill="none"/><path d="M8.5 1.5 V9.5" stroke="#e9b43a" stroke-width="2.6" stroke-linecap="round"/></svg>
<svg style="position:absolute;left:505px;top:762px;" width="18" height="14" viewBox="0 0 18 14"><path d="M2.5 11 V8 A6.5 6.5 0 0 1 15.5 8 V11" stroke="#c8c9cd" stroke-width="2" fill="none"/><rect x="0.5" y="8" width="4" height="6" fill="#c8c9cd"/><rect x="13.5" y="8" width="4" height="6" fill="#c8c9cd"/></svg>
<div class="t" style="left:530.5px;top:761.0px;font-size:12.4px;line-height:16px;color:#eeeef0;">Equalize 2</div>
<svg style="position:absolute;left:786px;top:764px;" width="12" height="12" viewBox="0 0 12 12"><path d="M1.5 1.5 L10.5 10.5 M10.5 1.5 L1.5 10.5" stroke="#e23a3a" stroke-width="3"/></svg>
<svg style="position:absolute;left:806px;top:762px;" width="14" height="14" viewBox="0 0 14 14"><path d="M7 0.5 V13.5 M0.5 7 H13.5" stroke="#d8d9dc" stroke-width="3"/></svg>
<svg style="position:absolute;left:806px;top:789px;" width="14" height="14" viewBox="0 0 14 14"><path d="M7 0.5 V13.5 M0.5 7 H13.5" stroke="#d8d9dc" stroke-width="3"/></svg>
<div style="left:859.5px;top:731px;width:14px;height:122px;background:#34363d;"></div>
<div style="left:861.5px;top:776px;width:10px;height:75px;background:#cf9a2a;"></div>
<div style="left:859px;top:754px;width:16px;height:21.5px;background:linear-gradient(#f2f2f4,#b9babe);border-radius:3px;"></div>
<div style="left:863px;top:764.5px;width:8px;height:1px;background:#8a8b90;"></div>
<div style="left:842.8px;top:864.7px;width:48px;height:20px;background:#d0d1d6;"></div>
<div class="t" style="left:842.5px;width:48px;text-align:center;top:866.5px;font-size:12.3px;line-height:16px;color:#111;">-0.8</div>
<div style="left:899px;top:664px;width:4px;height:233px;background:#4b4e57;"></div>
<div style="left:903px;top:664px;width:622px;height:229px;background:#17181d;"></div>
<div style="left:903px;top:664px;width:622px;height:24px;background:#30323b;"></div>
<div style="left:1525px;top:664px;width:2px;height:233px;background:#4c4f58;"></div>
<div style="left:1527px;top:664px;width:4px;height:233px;background:#3a3c45;"></div>
<div style="left:0px;top:893px;width:1531px;height:4px;background:#3b3d46;"></div>
<svg style="position:absolute;left:903px;top:665px;" width="147" height="24" viewBox="0 0 147 24"><path d="M0 23 L12 0.5 H134 L146 23Z" fill="#f5b42b" stroke="#25262b" stroke-width="0.8"/></svg>
<div class="t" style="left:927px;top:668.5px;font-size:12.5px;line-height:16px;color:#1d1a12;">Loudness Meter</div>
<svg style="position:absolute;left:1022.5px;top:670px;" width="11" height="11" viewBox="0 0 11 11"><path d="M1.5 1.5 L9.5 9.5 M9.5 1.5 L1.5 9.5" stroke="#111" stroke-width="2.6"/></svg>
<svg style="position:absolute;left:1049px;top:665px;" width="163" height="24" viewBox="0 0 163 24"><path d="M0 23 L12 0.5 H150 L162 23Z" fill="#5a5d68" stroke="#25262b" stroke-width="0.8"/></svg>
<div class="t" style="left:1075px;top:668.5px;font-size:12.5px;line-height:16px;color:#e8e8ea;">Spectrum Analyzer</div>
<svg style="position:absolute;left:1186px;top:670px;" width="11" height="11" viewBox="0 0 11 11"><path d="M1.5 1.5 L9.5 9.5 M9.5 1.5 L1.5 9.5" stroke="#eee" stroke-width="2.6"/></svg>
<div style="left:903px;top:687px;width:622px;height:1.3px;background:#dcaa48;"></div>
<svg style="position:absolute;left:919.6px;top:704px;" width="382" height="142" viewBox="0 0 382 142"><rect x="0" y="0" width="381" height="47" fill="#3a1f23"/><rect x="0" y="47" width="381" height="93" fill="#232428"/><rect x="0" y="13" width="381" height="1" fill="#45383c" opacity="0.9"/><rect x="0" y="39.5" width="381" height="1" fill="#45383c" opacity="0.9"/><rect x="0" y="65.6" width="381" height="1" fill="#3a3b40"/><rect x="0" y="91.5" width="381" height="1" fill="#3a3b40"/><rect x="0" y="117" width="381" height="1" fill="#3a3b40"/><rect x="0.0" y="0" width="1" height="140" fill="#3f4045"/><rect x="63.5" y="0" width="1" height="140" fill="#3f4045"/><rect x="127.0" y="0" width="1" height="140" fill="#3f4045"/><rect x="190.5" y="0" width="1" height="140" fill="#3f4045"/><rect x="254.0" y="0" width="1" height="140" fill="#3f4045"/><rect x="317.5" y="0" width="1" height="140" fill="#3f4045"/><rect x="381.0" y="0" width="1" height="140" fill="#3f4045"/><rect x="0" y="139.5" width="381" height="1.5" fill="#a9bccd"/><rect x="380" y="60" width="1.5" height="80" fill="#a9bccd" opacity="0.6"/></svg>
<div style="left:919.6px;top:844px;width:1px;height:5px;background:#c5c6ca;"></div>
<div class="t" style="left:904.6px;width:30px;text-align:center;top:850.5px;font-size:10px;line-height:13px;color:#c5c6ca;">-30</div>
<div style="left:983.1px;top:844px;width:1px;height:5px;background:#c5c6ca;"></div>
<div class="t" style="left:968.1px;width:30px;text-align:center;top:850.5px;font-size:10px;line-height:13px;color:#c5c6ca;">-25</div>
<div style="left:1046.6px;top:844px;width:1px;height:5px;background:#c5c6ca;"></div>
<div class="t" style="left:1031.6px;width:30px;text-align:center;top:850.5px;font-size:10px;line-height:13px;color:#c5c6ca;">-20</div>
<div style="left:1110.1px;top:844px;width:1px;height:5px;background:#c5c6ca;"></div>
<div class="t" style="left:1095.1px;width:30px;text-align:center;top:850.5px;font-size:10px;line-height:13px;color:#c5c6ca;">-15</div>
<div style="left:1173.6px;top:844px;width:1px;height:5px;background:#c5c6ca;"></div>
<div class="t" style="left:1158.6px;width:30px;text-align:center;top:850.5px;font-size:10px;line-height:13px;color:#c5c6ca;">-10</div>
<div style="left:1237.1px;top:844px;width:1px;height:5px;background:#c5c6ca;"></div>
<div class="t" style="left:1222.1px;width:30px;text-align:center;top:850.5px;font-size:10px;line-height:13px;color:#c5c6ca;">-5</div>
<div style="left:1300.6px;top:844px;width:1px;height:5px;background:#c5c6ca;"></div>
<div class="t" style="left:1285.6px;width:30px;text-align:center;top:850.5px;font-size:10px;line-height:13px;color:#c5c6ca;">0</div>
<div class="t" style="left:1080.0px;width:60px;text-align:center;top:870.5px;font-size:10px;line-height:13px;color:#c5c6ca;">Time (s)</div>
<svg style="position:absolute;left:913px;top:871px;" width="15" height="15" viewBox="0 0 15 15"><path d="M2.5 12.5 L8 7" stroke="#a4a6ab" stroke-width="2.8" stroke-linecap="round"/><circle cx="10" cy="5" r="3.8" fill="#a4a6ab"/><path d="M10.5 0.5 L14.5 4.5 L12 6.5 L8.5 3Z" fill="#17181d"/></svg>
<div style="left:1305px;top:704px;width:16px;height:140px;background:#2e2f34;"></div>
<div style="left:1305px;top:764px;width:16px;height:80px;background:#fdd568;"></div>
<div style="left:1325px;top:704px;width:16px;height:140px;background:#2e2f34;"></div>
<div style="left:1325px;top:787px;width:16px;height:57px;background:#4a88c2;"></div>
<div style="left:1341px;top:716.5px;width:6px;height:1px;background:#9a9ca2;"></div>
<div class="t" style="left:1349px;top:710.5px;font-size:10px;line-height:13px;color:#c5c6ca;">-10</div>
<div style="left:1341px;top:743.0px;width:6px;height:1px;background:#9a9ca2;"></div>
<div class="t" style="left:1349px;top:737.0px;font-size:10px;line-height:13px;color:#c5c6ca;">-20</div>
<div style="left:1341px;top:769.1px;width:6px;height:1px;background:#9a9ca2;"></div>
<div class="t" style="left:1349px;top:763.1px;font-size:10px;line-height:13px;color:#c5c6ca;">-30</div>
<div style="left:1341px;top:795.0px;width:6px;height:1px;background:#9a9ca2;"></div>
<div class="t" style="left:1349px;top:789.0px;font-size:10px;line-height:13px;color:#c5c6ca;">-40</div>
<div style="left:1341px;top:820.3px;width:6px;height:1px;background:#9a9ca2;"></div>
<div class="t" style="left:1349px;top:814.3px;font-size:10px;line-height:13px;color:#c5c6ca;">-50</div>
<div class="t" style="left:1323.5px;width:100px;text-align:center;top:767.5px;font-size:10px;line-height:13px;color:#c5c6ca;transform:rotate(-90deg);">Loudness (LUFS)</div>
<div style="left:1341.6px;top:857.8px;width:47px;height:22.6px;background:linear-gradient(#eeeef0,#c5c6ca);border-radius:4px;"></div>
<div style="left:1364.7px;top:857.8px;width:23.9px;height:22.6px;background:linear-gradient(#f6bf3a,#e8a920);border-radius:0 4px 4px 0;"></div>
<svg style="position:absolute;left:1346px;top:862px;" width="14" height="14" viewBox="0 0 14 14"><circle cx="7" cy="7" r="5" fill="none" stroke="#111" stroke-width="1.8"/></svg>
<svg style="position:absolute;left:1370px;top:863px;" width="12" height="12" viewBox="0 0 12 12"><rect x="1" y="0" width="3.5" height="12" fill="#111"/><rect x="7.5" y="0" width="3.5" height="12" fill="#111"/></svg>
<div class="t" style="left:1382.8px;width:140px;text-align:center;top:697.3px;font-size:10.5px;line-height:14px;color:#e8e8ea;font-weight:normal;">Momentary (LUFS)</div>
<div class="t" style="left:1382.8px;width:140px;text-align:center;top:709.5px;font-size:17.2px;line-height:22px;color:#f8cf6a;font-weight:bold;">-28.1 (-28.1)</div>
<div class="t" style="left:1382.8px;width:140px;text-align:center;top:737.0px;font-size:10.5px;line-height:14px;color:#e8e8ea;font-weight:normal;">Short-term (LUFS)</div>
<div class="t" style="left:1382.8px;width:140px;text-align:center;top:749.4px;font-size:17.2px;line-height:22px;color:#4b8bc6;font-weight:bold;">-36.9 (-36.9)</div>
<div class="t" style="left:1382.8px;width:140px;text-align:center;top:777.0px;font-size:10.5px;line-height:14px;color:#e8e8ea;font-weight:normal;">Integrated (LUFS)</div>
<div class="t" style="left:1382.8px;width:140px;text-align:center;top:787.3px;font-size:21px;line-height:27px;color:#f4f4f6;font-weight:bold;">-∞</div>
<div class="t" style="left:1382.8px;width:140px;text-align:center;top:817.3px;font-size:10.5px;line-height:14px;color:#e8e8ea;font-weight:normal;">Loudness Range (LU)</div>
<div class="t" style="left:1382.8px;width:140px;text-align:center;top:829.0px;font-size:17px;line-height:22px;color:#f4f4f6;font-weight:bold;">0.0</div>
<div style="left:0px;top:0px;width:1.5px;height:897px;background:#262830;"></div>
<div style="left:1.5px;top:97px;width:2.5px;height:800px;background:#3b3d46;"></div>
</body></html>
